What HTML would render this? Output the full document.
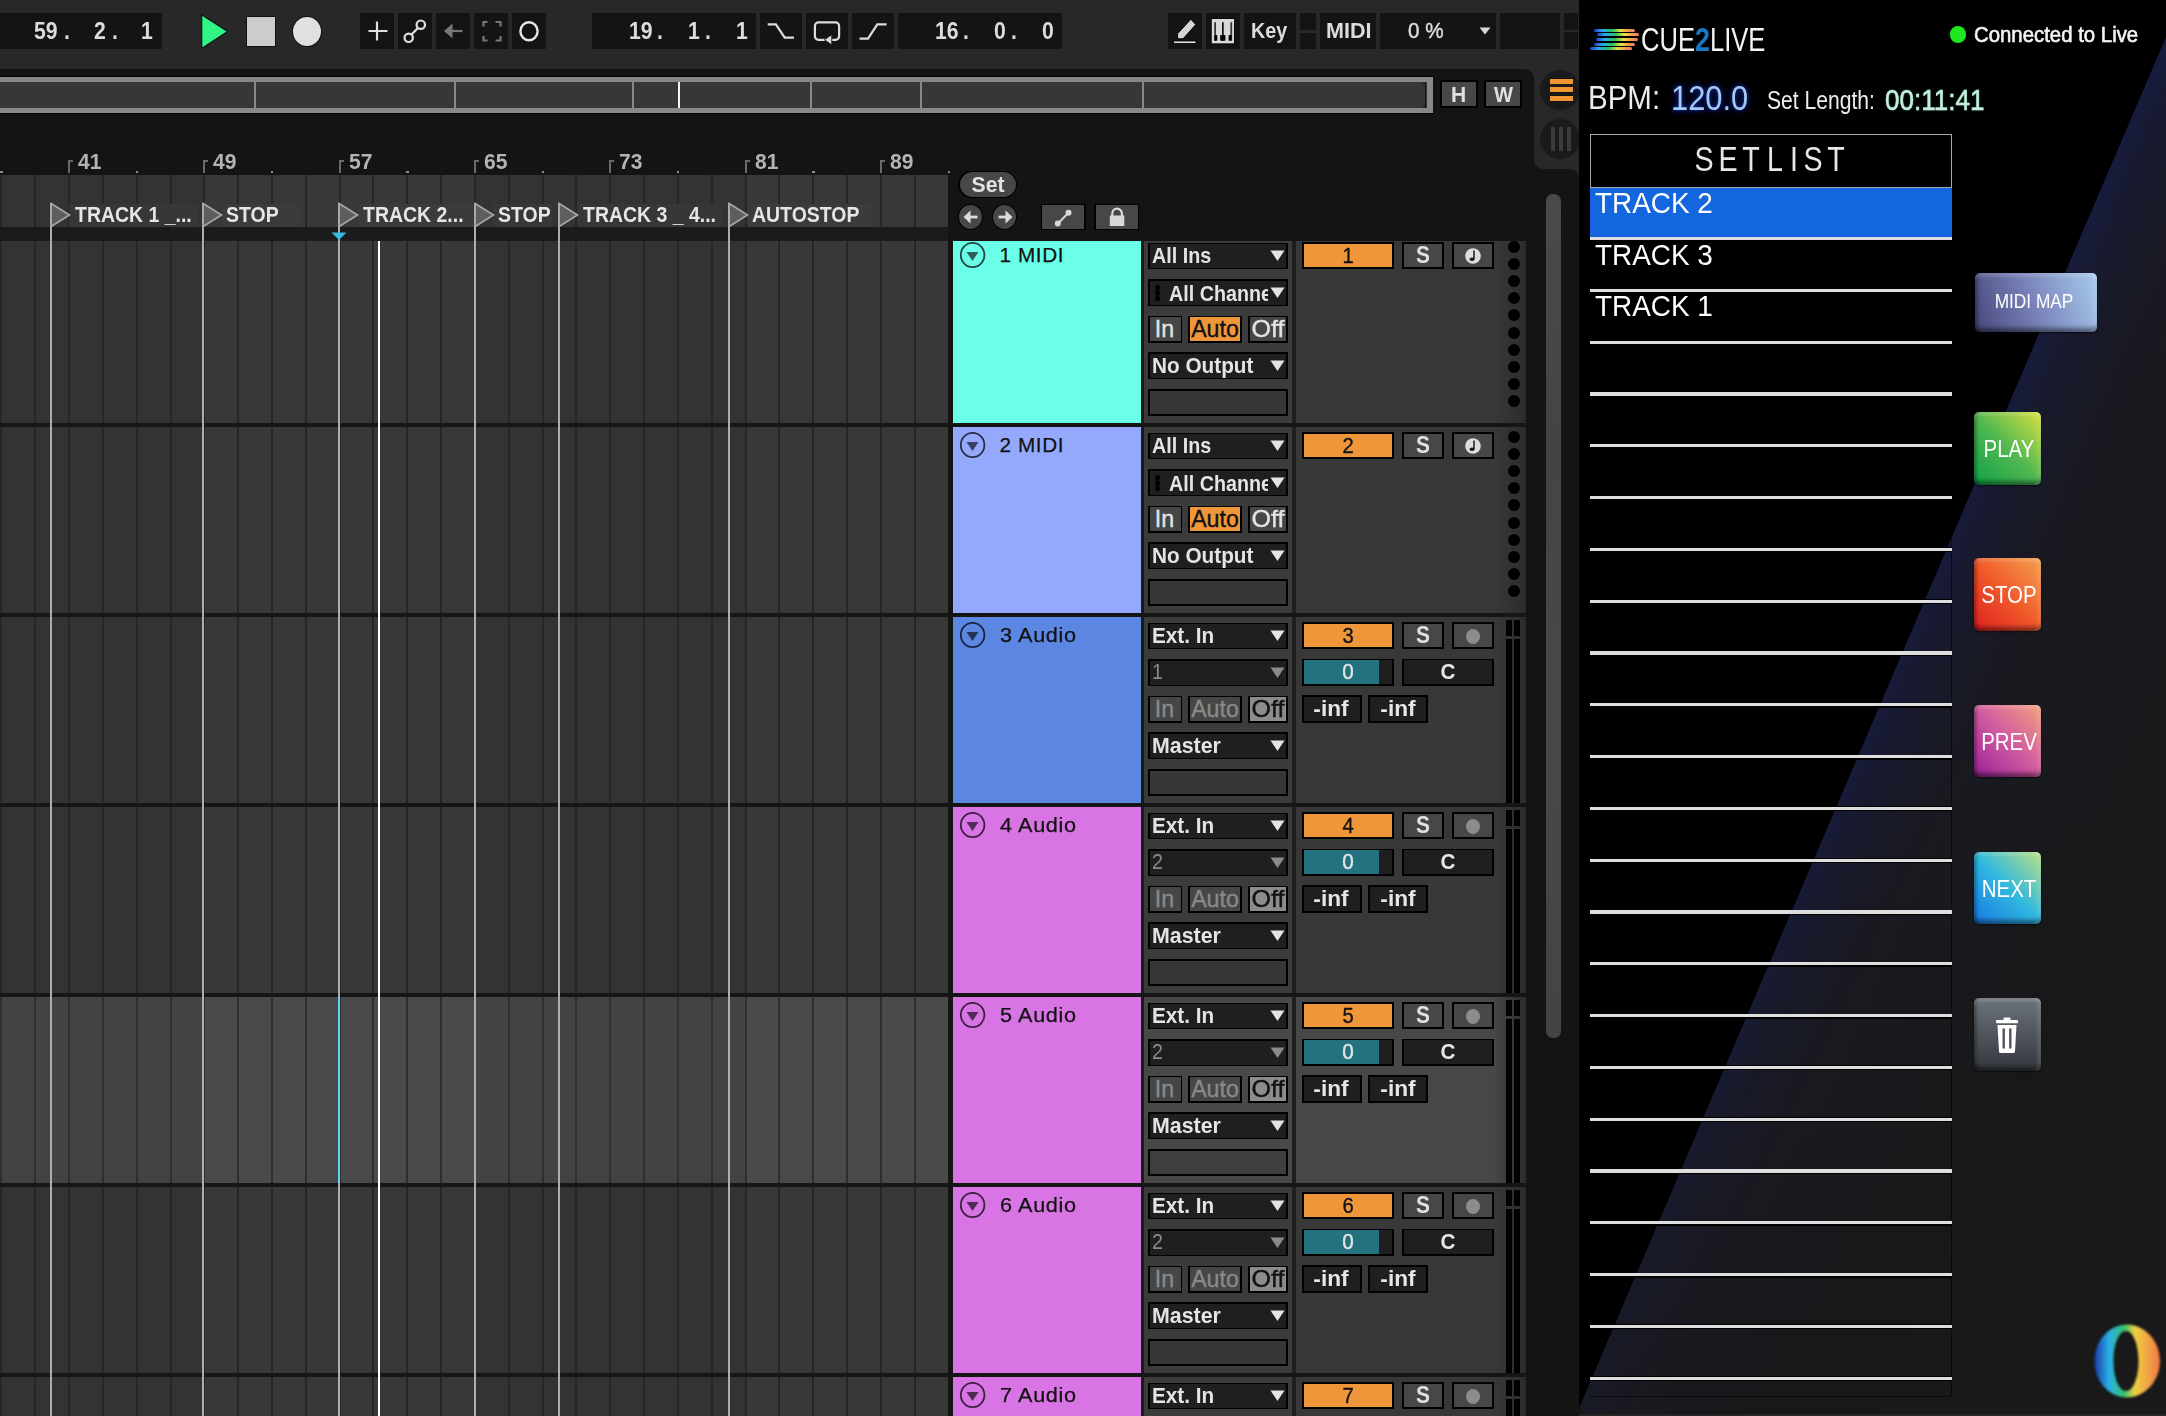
<!DOCTYPE html><html><head><meta charset="utf-8"><style>
html,body{margin:0;padding:0;}
body{width:2166px;height:1416px;overflow:hidden;position:relative;background:#151515;font-family:'Liberation Sans',sans-serif;}
.a{position:absolute;}
.t{position:absolute;white-space:pre;}
</style></head><body>
<div class="a" style="left:0px;top:0px;width:1579px;height:69px;background:#282828;"></div>
<div class="a" style="left:0px;top:13px;width:162px;height:36px;background:#141414;"></div>
<div class="t" style="left:34.00px;top:18.66px;font-size:24.64px;line-height:24.64px;font-weight:bold;color:#dcdcdc;font-family:'Liberation Sans', sans-serif;transform:scaleX(0.86);transform-origin:left top;">59</div>
<div class="t" style="left:63.50px;top:18.66px;font-size:24.64px;line-height:24.64px;font-weight:bold;color:#dcdcdc;font-family:'Liberation Sans', sans-serif;transform:scaleX(0.86);transform-origin:left top;">.</div>
<div class="t" style="left:93.50px;top:18.66px;font-size:24.64px;line-height:24.64px;font-weight:bold;color:#dcdcdc;font-family:'Liberation Sans', sans-serif;transform:scaleX(0.86);transform-origin:left top;">2</div>
<div class="t" style="left:111.50px;top:18.66px;font-size:24.64px;line-height:24.64px;font-weight:bold;color:#dcdcdc;font-family:'Liberation Sans', sans-serif;transform:scaleX(0.86);transform-origin:left top;">.</div>
<div class="t" style="left:141.00px;top:18.66px;font-size:24.64px;line-height:24.64px;font-weight:bold;color:#dcdcdc;font-family:'Liberation Sans', sans-serif;transform:scaleX(0.86);transform-origin:left top;">1</div>
<svg class="a" style="left:199px;top:12px;" width="32" height="40" viewBox="0 0 32 40"><polygon points="2.7,2.8 28.6,19.5 2.7,36.5" fill="#2ff585" stroke="#111" stroke-width="1.2"/></svg>
<div class="a" style="left:247px;top:16.5px;width:28px;height:29.5px;background:#cccccc;box-shadow:0 0 0 1px #111;"></div>
<div class="a" style="left:292.5px;top:16.5px;width:28.5px;height:29.5px;background:#e0e0e0;border-radius:50%;box-shadow:0 0 0 1px #111;"></div>
<div class="a" style="left:360px;top:13px;width:34px;height:36px;background:#141414;"></div>
<div class="a" style="left:398px;top:13px;width:34px;height:36px;background:#141414;"></div>
<div class="a" style="left:436px;top:13px;width:34px;height:36px;background:#141414;"></div>
<div class="a" style="left:474px;top:13px;width:34px;height:36px;background:#141414;"></div>
<div class="a" style="left:512px;top:13px;width:34px;height:36px;background:#141414;"></div>
<svg class="a" style="left:360px;top:13px;" width="34" height="36" viewBox="0 0 34 36"><path d="M17 8.5V27.5M8.5 18H27.5" stroke="#e0e0e0" stroke-width="2.2"/></svg>
<svg class="a" style="left:398px;top:13px;" width="34" height="36" viewBox="0 0 34 36"><circle cx="10.7" cy="24.8" r="4.2" fill="none" stroke="#e0e0e0" stroke-width="2.2"/><circle cx="22.8" cy="11.7" r="4.2" fill="none" stroke="#e0e0e0" stroke-width="2.2"/><path d="M13.6 21.6L19.9 14.9" stroke="#e0e0e0" stroke-width="2.2"/></svg>
<svg class="a" style="left:436px;top:13px;" width="34" height="36" viewBox="0 0 34 36"><polygon points="8,18 16.5,10.5 16.5,25.5" fill="#777"/><path d="M15 18H26.5" stroke="#777" stroke-width="2.2"/></svg>
<svg class="a" style="left:474px;top:13px;" width="34" height="36" viewBox="0 0 34 36"><path d="M9.5 13.5V9H13.5M21.5 9H26.5V13.5M9.5 23V27.5H13.5M21.5 27.5H26.5V23" fill="none" stroke="#777" stroke-width="2.2"/></svg>
<svg class="a" style="left:512px;top:13px;" width="34" height="36" viewBox="0 0 34 36"><ellipse cx="17" cy="18.3" rx="8.6" ry="9" fill="none" stroke="#e6e6e6" stroke-width="2.4"/></svg>
<div class="a" style="left:592px;top:13px;width:164px;height:36px;background:#141414;"></div>
<div class="t" style="left:628.80px;top:18.66px;font-size:24.64px;line-height:24.64px;font-weight:bold;color:#dcdcdc;font-family:'Liberation Sans', sans-serif;transform:scaleX(0.86);transform-origin:left top;">19</div>
<div class="t" style="left:657.00px;top:18.66px;font-size:24.64px;line-height:24.64px;font-weight:bold;color:#dcdcdc;font-family:'Liberation Sans', sans-serif;transform:scaleX(0.86);transform-origin:left top;">.</div>
<div class="t" style="left:688.00px;top:18.66px;font-size:24.64px;line-height:24.64px;font-weight:bold;color:#dcdcdc;font-family:'Liberation Sans', sans-serif;transform:scaleX(0.86);transform-origin:left top;">1</div>
<div class="t" style="left:705.00px;top:18.66px;font-size:24.64px;line-height:24.64px;font-weight:bold;color:#dcdcdc;font-family:'Liberation Sans', sans-serif;transform:scaleX(0.86);transform-origin:left top;">.</div>
<div class="t" style="left:736.00px;top:18.66px;font-size:24.64px;line-height:24.64px;font-weight:bold;color:#dcdcdc;font-family:'Liberation Sans', sans-serif;transform:scaleX(0.86);transform-origin:left top;">1</div>
<div class="a" style="left:760px;top:13px;width:42px;height:36px;background:#141414;"></div>
<div class="a" style="left:806px;top:13px;width:42px;height:36px;background:#141414;"></div>
<div class="a" style="left:852px;top:13px;width:42px;height:36px;background:#141414;"></div>
<svg class="a" style="left:760px;top:13px;" width="42" height="36" viewBox="0 0 42 36"><path d="M7.7 11.4H15.9L24.7 24.7H34" fill="none" stroke="#dcdcdc" stroke-width="2.2"/></svg>
<svg class="a" style="left:806px;top:13px;" width="42" height="36" viewBox="0 0 42 36"><rect x="8.9" y="9.4" width="24.2" height="17.4" rx="3.5" fill="none" stroke="#dcdcdc" stroke-width="2.2"/><polygon points="18.4,26.8 25.8,21.5 25.8,32" fill="#dcdcdc" stroke="#141414" stroke-width="1"/></svg>
<svg class="a" style="left:852px;top:13px;" width="42" height="36" viewBox="0 0 42 36"><path d="M7.6 25.7H16L25.3 11.4H34.6" fill="none" stroke="#dcdcdc" stroke-width="2.2"/></svg>
<div class="a" style="left:898px;top:13px;width:164px;height:36px;background:#141414;"></div>
<div class="t" style="left:934.70px;top:18.66px;font-size:24.64px;line-height:24.64px;font-weight:bold;color:#dcdcdc;font-family:'Liberation Sans', sans-serif;transform:scaleX(0.86);transform-origin:left top;">16</div>
<div class="t" style="left:963.00px;top:18.66px;font-size:24.64px;line-height:24.64px;font-weight:bold;color:#dcdcdc;font-family:'Liberation Sans', sans-serif;transform:scaleX(0.86);transform-origin:left top;">.</div>
<div class="t" style="left:993.50px;top:18.66px;font-size:24.64px;line-height:24.64px;font-weight:bold;color:#dcdcdc;font-family:'Liberation Sans', sans-serif;transform:scaleX(0.86);transform-origin:left top;">0</div>
<div class="t" style="left:1011.00px;top:18.66px;font-size:24.64px;line-height:24.64px;font-weight:bold;color:#dcdcdc;font-family:'Liberation Sans', sans-serif;transform:scaleX(0.86);transform-origin:left top;">.</div>
<div class="t" style="left:1041.50px;top:18.66px;font-size:24.64px;line-height:24.64px;font-weight:bold;color:#dcdcdc;font-family:'Liberation Sans', sans-serif;transform:scaleX(0.86);transform-origin:left top;">0</div>
<div class="a" style="left:1168px;top:13px;width:34px;height:36px;background:#141414;"></div>
<svg class="a" style="left:1168px;top:13px;" width="34" height="36" viewBox="0 0 34 36"><polygon points="22.9,6.2 27.8,11.6 15.1,25.8 9.6,25.8 9.6,20.6" fill="#d4d4d4" stroke="#000" stroke-width="1"/><rect x="5.5" y="28" width="22.5" height="2.6" fill="#dcdcdc" stroke="#000" stroke-width="0.8"/></svg>
<div class="a" style="left:1206px;top:13px;width:34px;height:36px;background:#141414;"></div>
<svg class="a" style="left:1206px;top:13px;" width="34" height="36" viewBox="0 0 34 36"><rect x="5.2" y="5.4" width="23.4" height="25.5" fill="#d8d8d8" stroke="#000" stroke-width="1"/><rect x="8.3" y="9.2" width="1.7" height="18.5" fill="#333"/><rect x="16" y="9.2" width="1.7" height="18.5" fill="#111"/><rect x="24.4" y="9.2" width="1.7" height="18.5" fill="#333"/><rect x="8.3" y="22.1" width="3" height="5.6" fill="#000"/><rect x="14.2" y="22.1" width="5.2" height="5.6" fill="#000"/><rect x="22.6" y="22.1" width="3" height="5.6" fill="#000"/></svg>
<div class="a" style="left:1244px;top:13px;width:52px;height:36px;background:#141414;"></div>
<div class="t" style="left:1251.00px;top:19.71px;font-size:22.46px;line-height:22.46px;font-weight:bold;color:#dcdcdc;font-family:'Liberation Sans', sans-serif;transform:scaleX(0.88);transform-origin:left top;">Key</div>
<div class="a" style="left:1300px;top:13px;width:16px;height:16.5px;background:#141414;"></div>
<div class="a" style="left:1300px;top:32.5px;width:16px;height:16.5px;background:#141414;"></div>
<div class="a" style="left:1320px;top:13px;width:56px;height:36px;background:#141414;"></div>
<div class="t" style="left:1325.80px;top:19.71px;font-size:22.46px;line-height:22.46px;font-weight:bold;color:#dcdcdc;font-family:'Liberation Sans', sans-serif;transform:scaleX(0.96);transform-origin:left top;">MIDI</div>
<div class="a" style="left:1380px;top:13px;width:116px;height:36px;background:#141414;"></div>
<div class="t" style="left:1408.20px;top:19.71px;font-size:22.46px;line-height:22.46px;font-weight:normal;color:#dcdcdc;font-family:'Liberation Sans', sans-serif;transform:scaleX(0.92);transform-origin:left top;-webkit-text-stroke:0.45px #dedede;">0 %</div>
<svg class="a" style="left:1479px;top:27px;" width="12" height="8" viewBox="0 0 12 8"><polygon points="0.5,0.5 11.5,0.5 6,7.5" fill="#d8d8d8"/></svg>
<div class="a" style="left:1500px;top:13px;width:60px;height:36px;background:#141414;"></div>
<div class="a" style="left:1564px;top:13px;width:14px;height:17px;background:#141414;"></div>
<div class="a" style="left:1564px;top:32px;width:14px;height:17px;background:#141414;"></div>
<div class="a" style="left:1515px;top:69px;width:64px;height:120px;background:#282828;"></div>
<div class="a" style="left:0px;top:69px;width:1534px;height:180px;background:#141414;border-top-right-radius:9px;"></div>
<div class="a" style="left:1526px;top:150px;width:16px;height:30px;background:#141414;"></div>
<div class="a" style="left:1534px;top:69px;width:45px;height:100px;background:#282828;border-bottom-left-radius:9px;"></div>
<div class="a" style="left:1526px;top:169px;width:53px;height:1247px;background:#141414;border-top-right-radius:9px;"></div>
<div class="a" style="left:0px;top:76px;width:1433px;height:1px;background:#000;"></div>
<div class="a" style="left:0px;top:77px;width:1433px;height:36px;background:#888888;box-shadow:0 1px 0 #000;"></div>
<div class="a" style="left:0px;top:82px;width:1427px;height:26px;background:#373737;"></div>
<div class="a" style="left:254px;top:82px;width:2px;height:26px;background:#888888;"></div>
<div class="a" style="left:454px;top:82px;width:2px;height:26px;background:#888888;"></div>
<div class="a" style="left:632px;top:82px;width:2px;height:26px;background:#888888;"></div>
<div class="a" style="left:810px;top:82px;width:2px;height:26px;background:#888888;"></div>
<div class="a" style="left:920px;top:82px;width:2px;height:26px;background:#888888;"></div>
<div class="a" style="left:1142px;top:82px;width:2px;height:26px;background:#888888;"></div>
<div class="a" style="left:678px;top:82px;width:2px;height:26px;background:#f4f4f4;"></div>
<div class="a" style="left:1425px;top:83px;width:1.3px;height:24.5px;background:#111;"></div>
<div class="a" style="left:1423px;top:83px;width:3px;height:1.2px;background:#111;"></div>
<div class="a" style="left:1423px;top:106.3px;width:3px;height:1.2px;background:#111;"></div>
<div class="a" style="left:1440px;top:80px;width:38px;height:28px;background:#000;"></div>
<div class="a" style="left:1441.7px;top:82px;width:34.5px;height:24px;background:#474747;"></div>
<div class="a" style="left:1484px;top:80px;width:38px;height:28px;background:#000;"></div>
<div class="a" style="left:1485.7px;top:82px;width:34.5px;height:24px;background:#474747;"></div>
<div class="t" style="left:1451.00px;top:82.64px;font-size:22.90px;line-height:22.90px;font-weight:bold;color:#e0e0e0;font-family:'Liberation Sans', sans-serif;transform:scaleX(0.92);transform-origin:left top;">H</div>
<div class="t" style="left:1493.50px;top:82.64px;font-size:22.90px;line-height:22.90px;font-weight:bold;color:#e0e0e0;font-family:'Liberation Sans', sans-serif;transform:scaleX(0.88);transform-origin:left top;">W</div>
<div class="a" style="left:1540px;top:69.5px;width:40px;height:40px;background:#1a1a1a;border-radius:50%;"></div>
<div class="a" style="left:1549.5px;top:77.8px;width:23.2px;height:6.4px;background:#111;"></div>
<div class="a" style="left:1550px;top:78.5px;width:22.5px;height:5px;background:#ef9532;"></div>
<div class="a" style="left:1549.5px;top:86.5px;width:23.2px;height:6.4px;background:#111;"></div>
<div class="a" style="left:1550px;top:87.2px;width:22.5px;height:5px;background:#ef9532;"></div>
<div class="a" style="left:1549.5px;top:95.3px;width:23.2px;height:6.4px;background:#111;"></div>
<div class="a" style="left:1550px;top:96px;width:22.5px;height:5px;background:#ef9532;"></div>
<div class="a" style="left:1540px;top:119px;width:40px;height:40px;background:#1a1a1a;border-radius:50%;"></div>
<div class="a" style="left:1551px;top:127px;width:4px;height:24px;background:#3a3a3a;"></div>
<div class="a" style="left:1559px;top:127px;width:4px;height:24px;background:#3a3a3a;"></div>
<div class="a" style="left:1567px;top:127px;width:4px;height:24px;background:#3a3a3a;"></div>
<div class="a" style="left:1546px;top:193.5px;width:14.5px;height:844.5px;background:linear-gradient(#4a4a4a,#444 30%,#484848 60%,#444);border-radius:7px;"></div>
<div class="a" style="left:68.0px;top:160px;width:2px;height:13px;background:#6a6a6a;"></div>
<div class="a" style="left:68.0px;top:160px;width:5px;height:2px;background:#6a6a6a;"></div>
<div class="t" style="left:78.00px;top:150.14px;font-size:22.90px;line-height:22.90px;font-weight:bold;color:#b4b4b4;font-family:'Liberation Sans', sans-serif;transform:scaleX(0.92);transform-origin:left top;">41</div>
<div class="a" style="left:203.33px;top:160px;width:2px;height:13px;background:#6a6a6a;"></div>
<div class="a" style="left:203.33px;top:160px;width:5px;height:2px;background:#6a6a6a;"></div>
<div class="t" style="left:213.33px;top:150.14px;font-size:22.90px;line-height:22.90px;font-weight:bold;color:#b4b4b4;font-family:'Liberation Sans', sans-serif;transform:scaleX(0.92);transform-origin:left top;">49</div>
<div class="a" style="left:338.66px;top:160px;width:2px;height:13px;background:#6a6a6a;"></div>
<div class="a" style="left:338.66px;top:160px;width:5px;height:2px;background:#6a6a6a;"></div>
<div class="t" style="left:348.66px;top:150.14px;font-size:22.90px;line-height:22.90px;font-weight:bold;color:#b4b4b4;font-family:'Liberation Sans', sans-serif;transform:scaleX(0.92);transform-origin:left top;">57</div>
<div class="a" style="left:473.99px;top:160px;width:2px;height:13px;background:#6a6a6a;"></div>
<div class="a" style="left:473.99px;top:160px;width:5px;height:2px;background:#6a6a6a;"></div>
<div class="t" style="left:483.99px;top:150.14px;font-size:22.90px;line-height:22.90px;font-weight:bold;color:#b4b4b4;font-family:'Liberation Sans', sans-serif;transform:scaleX(0.92);transform-origin:left top;">65</div>
<div class="a" style="left:609.32px;top:160px;width:2px;height:13px;background:#6a6a6a;"></div>
<div class="a" style="left:609.32px;top:160px;width:5px;height:2px;background:#6a6a6a;"></div>
<div class="t" style="left:619.32px;top:150.14px;font-size:22.90px;line-height:22.90px;font-weight:bold;color:#b4b4b4;font-family:'Liberation Sans', sans-serif;transform:scaleX(0.92);transform-origin:left top;">73</div>
<div class="a" style="left:744.6500000000001px;top:160px;width:2px;height:13px;background:#6a6a6a;"></div>
<div class="a" style="left:744.6500000000001px;top:160px;width:5px;height:2px;background:#6a6a6a;"></div>
<div class="t" style="left:754.65px;top:150.14px;font-size:22.90px;line-height:22.90px;font-weight:bold;color:#b4b4b4;font-family:'Liberation Sans', sans-serif;transform:scaleX(0.92);transform-origin:left top;">81</div>
<div class="a" style="left:879.98px;top:160px;width:2px;height:13px;background:#6a6a6a;"></div>
<div class="a" style="left:879.98px;top:160px;width:5px;height:2px;background:#6a6a6a;"></div>
<div class="t" style="left:889.98px;top:150.14px;font-size:22.90px;line-height:22.90px;font-weight:bold;color:#b4b4b4;font-family:'Liberation Sans', sans-serif;transform:scaleX(0.92);transform-origin:left top;">89</div>
<div class="a" style="left:0.33499999999999375px;top:170.5px;width:2.2px;height:2.2px;background:#8a8a8a;"></div>
<div class="a" style="left:135.66500000000002px;top:170.5px;width:2.2px;height:2.2px;background:#8a8a8a;"></div>
<div class="a" style="left:270.995px;top:170.5px;width:2.2px;height:2.2px;background:#8a8a8a;"></div>
<div class="a" style="left:406.32500000000005px;top:170.5px;width:2.2px;height:2.2px;background:#8a8a8a;"></div>
<div class="a" style="left:541.655px;top:170.5px;width:2.2px;height:2.2px;background:#8a8a8a;"></div>
<div class="a" style="left:676.985px;top:170.5px;width:2.2px;height:2.2px;background:#8a8a8a;"></div>
<div class="a" style="left:812.315px;top:170.5px;width:2.2px;height:2.2px;background:#8a8a8a;"></div>
<div class="a" style="left:947.645px;top:170.5px;width:2.2px;height:2.2px;background:#8a8a8a;"></div>
<div class="a" style="left:0px;top:170.5px;width:2.2px;height:2.2px;background:#8a8a8a;"></div>
<div class="a" style="left:0px;top:174.5px;width:948px;height:52.5px;background:#333333;"></div>
<div class="a" style="left:203.3px;top:174.5px;width:271.4px;height:52.5px;background:#383838;"></div>
<div class="a" style="left:745.3px;top:174.5px;width:202.70000000000005px;height:52.5px;background:#383838;"></div>
<div class="a" style="left:0px;top:227px;width:948px;height:14px;background:#1b1b1b;"></div>
<div class="a" style="left:0.33px;top:174.5px;width:2px;height:52.5px;background:#262626;"></div>
<div class="a" style="left:34.17px;top:174.5px;width:2px;height:52.5px;background:#262626;"></div>
<div class="a" style="left:68.0px;top:174.5px;width:2px;height:52.5px;background:#262626;"></div>
<div class="a" style="left:101.83px;top:174.5px;width:2px;height:52.5px;background:#262626;"></div>
<div class="a" style="left:135.67px;top:174.5px;width:2px;height:52.5px;background:#262626;"></div>
<div class="a" style="left:169.5px;top:174.5px;width:2px;height:52.5px;background:#262626;"></div>
<div class="a" style="left:203.33px;top:174.5px;width:2px;height:52.5px;background:#262626;"></div>
<div class="a" style="left:237.16px;top:174.5px;width:2px;height:52.5px;background:#262626;"></div>
<div class="a" style="left:271.0px;top:174.5px;width:2px;height:52.5px;background:#262626;"></div>
<div class="a" style="left:304.83px;top:174.5px;width:2px;height:52.5px;background:#262626;"></div>
<div class="a" style="left:338.66px;top:174.5px;width:2px;height:52.5px;background:#262626;"></div>
<div class="a" style="left:372.49px;top:174.5px;width:2px;height:52.5px;background:#262626;"></div>
<div class="a" style="left:406.33px;top:174.5px;width:2px;height:52.5px;background:#262626;"></div>
<div class="a" style="left:440.16px;top:174.5px;width:2px;height:52.5px;background:#262626;"></div>
<div class="a" style="left:473.99px;top:174.5px;width:2px;height:52.5px;background:#262626;"></div>
<div class="a" style="left:507.82px;top:174.5px;width:2px;height:52.5px;background:#262626;"></div>
<div class="a" style="left:541.65px;top:174.5px;width:2px;height:52.5px;background:#262626;"></div>
<div class="a" style="left:575.49px;top:174.5px;width:2px;height:52.5px;background:#262626;"></div>
<div class="a" style="left:609.32px;top:174.5px;width:2px;height:52.5px;background:#262626;"></div>
<div class="a" style="left:643.15px;top:174.5px;width:2px;height:52.5px;background:#262626;"></div>
<div class="a" style="left:676.99px;top:174.5px;width:2px;height:52.5px;background:#262626;"></div>
<div class="a" style="left:710.82px;top:174.5px;width:2px;height:52.5px;background:#262626;"></div>
<div class="a" style="left:744.65px;top:174.5px;width:2px;height:52.5px;background:#262626;"></div>
<div class="a" style="left:778.48px;top:174.5px;width:2px;height:52.5px;background:#262626;"></div>
<div class="a" style="left:812.32px;top:174.5px;width:2px;height:52.5px;background:#262626;"></div>
<div class="a" style="left:846.15px;top:174.5px;width:2px;height:52.5px;background:#262626;"></div>
<div class="a" style="left:879.98px;top:174.5px;width:2px;height:52.5px;background:#262626;"></div>
<div class="a" style="left:913.81px;top:174.5px;width:2px;height:52.5px;background:#262626;"></div>
<div class="a" style="left:0px;top:241px;width:948px;height:182px;background:#333333;"></div>
<div class="a" style="left:203.3px;top:241px;width:271.4px;height:182px;background:#383838;"></div>
<div class="a" style="left:745.3px;top:241px;width:202.70000000000005px;height:182px;background:#383838;"></div>
<div class="a" style="left:0.33px;top:241px;width:2px;height:182px;background:#262626;"></div>
<div class="a" style="left:34.17px;top:241px;width:2px;height:182px;background:#262626;"></div>
<div class="a" style="left:68.0px;top:241px;width:2px;height:182px;background:#262626;"></div>
<div class="a" style="left:101.83px;top:241px;width:2px;height:182px;background:#262626;"></div>
<div class="a" style="left:135.67px;top:241px;width:2px;height:182px;background:#262626;"></div>
<div class="a" style="left:169.5px;top:241px;width:2px;height:182px;background:#262626;"></div>
<div class="a" style="left:203.33px;top:241px;width:2px;height:182px;background:#262626;"></div>
<div class="a" style="left:237.16px;top:241px;width:2px;height:182px;background:#262626;"></div>
<div class="a" style="left:271.0px;top:241px;width:2px;height:182px;background:#262626;"></div>
<div class="a" style="left:304.83px;top:241px;width:2px;height:182px;background:#262626;"></div>
<div class="a" style="left:338.66px;top:241px;width:2px;height:182px;background:#262626;"></div>
<div class="a" style="left:372.49px;top:241px;width:2px;height:182px;background:#262626;"></div>
<div class="a" style="left:406.33px;top:241px;width:2px;height:182px;background:#262626;"></div>
<div class="a" style="left:440.16px;top:241px;width:2px;height:182px;background:#262626;"></div>
<div class="a" style="left:473.99px;top:241px;width:2px;height:182px;background:#262626;"></div>
<div class="a" style="left:507.82px;top:241px;width:2px;height:182px;background:#262626;"></div>
<div class="a" style="left:541.65px;top:241px;width:2px;height:182px;background:#262626;"></div>
<div class="a" style="left:575.49px;top:241px;width:2px;height:182px;background:#262626;"></div>
<div class="a" style="left:609.32px;top:241px;width:2px;height:182px;background:#262626;"></div>
<div class="a" style="left:643.15px;top:241px;width:2px;height:182px;background:#262626;"></div>
<div class="a" style="left:676.99px;top:241px;width:2px;height:182px;background:#262626;"></div>
<div class="a" style="left:710.82px;top:241px;width:2px;height:182px;background:#262626;"></div>
<div class="a" style="left:744.65px;top:241px;width:2px;height:182px;background:#262626;"></div>
<div class="a" style="left:778.48px;top:241px;width:2px;height:182px;background:#262626;"></div>
<div class="a" style="left:812.32px;top:241px;width:2px;height:182px;background:#262626;"></div>
<div class="a" style="left:846.15px;top:241px;width:2px;height:182px;background:#262626;"></div>
<div class="a" style="left:879.98px;top:241px;width:2px;height:182px;background:#262626;"></div>
<div class="a" style="left:913.81px;top:241px;width:2px;height:182px;background:#262626;"></div>
<div class="a" style="left:0px;top:423px;width:948px;height:4px;background:#161616;"></div>
<div class="a" style="left:0px;top:427px;width:948px;height:186px;background:#333333;"></div>
<div class="a" style="left:203.3px;top:427px;width:271.4px;height:186px;background:#383838;"></div>
<div class="a" style="left:745.3px;top:427px;width:202.70000000000005px;height:186px;background:#383838;"></div>
<div class="a" style="left:0.33px;top:427px;width:2px;height:186px;background:#262626;"></div>
<div class="a" style="left:34.17px;top:427px;width:2px;height:186px;background:#262626;"></div>
<div class="a" style="left:68.0px;top:427px;width:2px;height:186px;background:#262626;"></div>
<div class="a" style="left:101.83px;top:427px;width:2px;height:186px;background:#262626;"></div>
<div class="a" style="left:135.67px;top:427px;width:2px;height:186px;background:#262626;"></div>
<div class="a" style="left:169.5px;top:427px;width:2px;height:186px;background:#262626;"></div>
<div class="a" style="left:203.33px;top:427px;width:2px;height:186px;background:#262626;"></div>
<div class="a" style="left:237.16px;top:427px;width:2px;height:186px;background:#262626;"></div>
<div class="a" style="left:271.0px;top:427px;width:2px;height:186px;background:#262626;"></div>
<div class="a" style="left:304.83px;top:427px;width:2px;height:186px;background:#262626;"></div>
<div class="a" style="left:338.66px;top:427px;width:2px;height:186px;background:#262626;"></div>
<div class="a" style="left:372.49px;top:427px;width:2px;height:186px;background:#262626;"></div>
<div class="a" style="left:406.33px;top:427px;width:2px;height:186px;background:#262626;"></div>
<div class="a" style="left:440.16px;top:427px;width:2px;height:186px;background:#262626;"></div>
<div class="a" style="left:473.99px;top:427px;width:2px;height:186px;background:#262626;"></div>
<div class="a" style="left:507.82px;top:427px;width:2px;height:186px;background:#262626;"></div>
<div class="a" style="left:541.65px;top:427px;width:2px;height:186px;background:#262626;"></div>
<div class="a" style="left:575.49px;top:427px;width:2px;height:186px;background:#262626;"></div>
<div class="a" style="left:609.32px;top:427px;width:2px;height:186px;background:#262626;"></div>
<div class="a" style="left:643.15px;top:427px;width:2px;height:186px;background:#262626;"></div>
<div class="a" style="left:676.99px;top:427px;width:2px;height:186px;background:#262626;"></div>
<div class="a" style="left:710.82px;top:427px;width:2px;height:186px;background:#262626;"></div>
<div class="a" style="left:744.65px;top:427px;width:2px;height:186px;background:#262626;"></div>
<div class="a" style="left:778.48px;top:427px;width:2px;height:186px;background:#262626;"></div>
<div class="a" style="left:812.32px;top:427px;width:2px;height:186px;background:#262626;"></div>
<div class="a" style="left:846.15px;top:427px;width:2px;height:186px;background:#262626;"></div>
<div class="a" style="left:879.98px;top:427px;width:2px;height:186px;background:#262626;"></div>
<div class="a" style="left:913.81px;top:427px;width:2px;height:186px;background:#262626;"></div>
<div class="a" style="left:0px;top:613px;width:948px;height:4px;background:#161616;"></div>
<div class="a" style="left:0px;top:617px;width:948px;height:186px;background:#333333;"></div>
<div class="a" style="left:203.3px;top:617px;width:271.4px;height:186px;background:#383838;"></div>
<div class="a" style="left:745.3px;top:617px;width:202.70000000000005px;height:186px;background:#383838;"></div>
<div class="a" style="left:0.33px;top:617px;width:2px;height:186px;background:#262626;"></div>
<div class="a" style="left:34.17px;top:617px;width:2px;height:186px;background:#262626;"></div>
<div class="a" style="left:68.0px;top:617px;width:2px;height:186px;background:#262626;"></div>
<div class="a" style="left:101.83px;top:617px;width:2px;height:186px;background:#262626;"></div>
<div class="a" style="left:135.67px;top:617px;width:2px;height:186px;background:#262626;"></div>
<div class="a" style="left:169.5px;top:617px;width:2px;height:186px;background:#262626;"></div>
<div class="a" style="left:203.33px;top:617px;width:2px;height:186px;background:#262626;"></div>
<div class="a" style="left:237.16px;top:617px;width:2px;height:186px;background:#262626;"></div>
<div class="a" style="left:271.0px;top:617px;width:2px;height:186px;background:#262626;"></div>
<div class="a" style="left:304.83px;top:617px;width:2px;height:186px;background:#262626;"></div>
<div class="a" style="left:338.66px;top:617px;width:2px;height:186px;background:#262626;"></div>
<div class="a" style="left:372.49px;top:617px;width:2px;height:186px;background:#262626;"></div>
<div class="a" style="left:406.33px;top:617px;width:2px;height:186px;background:#262626;"></div>
<div class="a" style="left:440.16px;top:617px;width:2px;height:186px;background:#262626;"></div>
<div class="a" style="left:473.99px;top:617px;width:2px;height:186px;background:#262626;"></div>
<div class="a" style="left:507.82px;top:617px;width:2px;height:186px;background:#262626;"></div>
<div class="a" style="left:541.65px;top:617px;width:2px;height:186px;background:#262626;"></div>
<div class="a" style="left:575.49px;top:617px;width:2px;height:186px;background:#262626;"></div>
<div class="a" style="left:609.32px;top:617px;width:2px;height:186px;background:#262626;"></div>
<div class="a" style="left:643.15px;top:617px;width:2px;height:186px;background:#262626;"></div>
<div class="a" style="left:676.99px;top:617px;width:2px;height:186px;background:#262626;"></div>
<div class="a" style="left:710.82px;top:617px;width:2px;height:186px;background:#262626;"></div>
<div class="a" style="left:744.65px;top:617px;width:2px;height:186px;background:#262626;"></div>
<div class="a" style="left:778.48px;top:617px;width:2px;height:186px;background:#262626;"></div>
<div class="a" style="left:812.32px;top:617px;width:2px;height:186px;background:#262626;"></div>
<div class="a" style="left:846.15px;top:617px;width:2px;height:186px;background:#262626;"></div>
<div class="a" style="left:879.98px;top:617px;width:2px;height:186px;background:#262626;"></div>
<div class="a" style="left:913.81px;top:617px;width:2px;height:186px;background:#262626;"></div>
<div class="a" style="left:0px;top:803px;width:948px;height:4px;background:#161616;"></div>
<div class="a" style="left:0px;top:807px;width:948px;height:186px;background:#333333;"></div>
<div class="a" style="left:203.3px;top:807px;width:271.4px;height:186px;background:#383838;"></div>
<div class="a" style="left:745.3px;top:807px;width:202.70000000000005px;height:186px;background:#383838;"></div>
<div class="a" style="left:0.33px;top:807px;width:2px;height:186px;background:#262626;"></div>
<div class="a" style="left:34.17px;top:807px;width:2px;height:186px;background:#262626;"></div>
<div class="a" style="left:68.0px;top:807px;width:2px;height:186px;background:#262626;"></div>
<div class="a" style="left:101.83px;top:807px;width:2px;height:186px;background:#262626;"></div>
<div class="a" style="left:135.67px;top:807px;width:2px;height:186px;background:#262626;"></div>
<div class="a" style="left:169.5px;top:807px;width:2px;height:186px;background:#262626;"></div>
<div class="a" style="left:203.33px;top:807px;width:2px;height:186px;background:#262626;"></div>
<div class="a" style="left:237.16px;top:807px;width:2px;height:186px;background:#262626;"></div>
<div class="a" style="left:271.0px;top:807px;width:2px;height:186px;background:#262626;"></div>
<div class="a" style="left:304.83px;top:807px;width:2px;height:186px;background:#262626;"></div>
<div class="a" style="left:338.66px;top:807px;width:2px;height:186px;background:#262626;"></div>
<div class="a" style="left:372.49px;top:807px;width:2px;height:186px;background:#262626;"></div>
<div class="a" style="left:406.33px;top:807px;width:2px;height:186px;background:#262626;"></div>
<div class="a" style="left:440.16px;top:807px;width:2px;height:186px;background:#262626;"></div>
<div class="a" style="left:473.99px;top:807px;width:2px;height:186px;background:#262626;"></div>
<div class="a" style="left:507.82px;top:807px;width:2px;height:186px;background:#262626;"></div>
<div class="a" style="left:541.65px;top:807px;width:2px;height:186px;background:#262626;"></div>
<div class="a" style="left:575.49px;top:807px;width:2px;height:186px;background:#262626;"></div>
<div class="a" style="left:609.32px;top:807px;width:2px;height:186px;background:#262626;"></div>
<div class="a" style="left:643.15px;top:807px;width:2px;height:186px;background:#262626;"></div>
<div class="a" style="left:676.99px;top:807px;width:2px;height:186px;background:#262626;"></div>
<div class="a" style="left:710.82px;top:807px;width:2px;height:186px;background:#262626;"></div>
<div class="a" style="left:744.65px;top:807px;width:2px;height:186px;background:#262626;"></div>
<div class="a" style="left:778.48px;top:807px;width:2px;height:186px;background:#262626;"></div>
<div class="a" style="left:812.32px;top:807px;width:2px;height:186px;background:#262626;"></div>
<div class="a" style="left:846.15px;top:807px;width:2px;height:186px;background:#262626;"></div>
<div class="a" style="left:879.98px;top:807px;width:2px;height:186px;background:#262626;"></div>
<div class="a" style="left:913.81px;top:807px;width:2px;height:186px;background:#262626;"></div>
<div class="a" style="left:0px;top:993px;width:948px;height:4px;background:#161616;"></div>
<div class="a" style="left:0px;top:997px;width:948px;height:186px;background:#434343;"></div>
<div class="a" style="left:203.3px;top:997px;width:271.4px;height:186px;background:#4a4a4a;"></div>
<div class="a" style="left:745.3px;top:997px;width:202.70000000000005px;height:186px;background:#4a4a4a;"></div>
<div class="a" style="left:0.33px;top:997px;width:2px;height:186px;background:#2f2f2f;"></div>
<div class="a" style="left:34.17px;top:997px;width:2px;height:186px;background:#2f2f2f;"></div>
<div class="a" style="left:68.0px;top:997px;width:2px;height:186px;background:#2f2f2f;"></div>
<div class="a" style="left:101.83px;top:997px;width:2px;height:186px;background:#2f2f2f;"></div>
<div class="a" style="left:135.67px;top:997px;width:2px;height:186px;background:#2f2f2f;"></div>
<div class="a" style="left:169.5px;top:997px;width:2px;height:186px;background:#2f2f2f;"></div>
<div class="a" style="left:203.33px;top:997px;width:2px;height:186px;background:#2f2f2f;"></div>
<div class="a" style="left:237.16px;top:997px;width:2px;height:186px;background:#2f2f2f;"></div>
<div class="a" style="left:271.0px;top:997px;width:2px;height:186px;background:#2f2f2f;"></div>
<div class="a" style="left:304.83px;top:997px;width:2px;height:186px;background:#2f2f2f;"></div>
<div class="a" style="left:338.66px;top:997px;width:2px;height:186px;background:#2f2f2f;"></div>
<div class="a" style="left:372.49px;top:997px;width:2px;height:186px;background:#2f2f2f;"></div>
<div class="a" style="left:406.33px;top:997px;width:2px;height:186px;background:#2f2f2f;"></div>
<div class="a" style="left:440.16px;top:997px;width:2px;height:186px;background:#2f2f2f;"></div>
<div class="a" style="left:473.99px;top:997px;width:2px;height:186px;background:#2f2f2f;"></div>
<div class="a" style="left:507.82px;top:997px;width:2px;height:186px;background:#2f2f2f;"></div>
<div class="a" style="left:541.65px;top:997px;width:2px;height:186px;background:#2f2f2f;"></div>
<div class="a" style="left:575.49px;top:997px;width:2px;height:186px;background:#2f2f2f;"></div>
<div class="a" style="left:609.32px;top:997px;width:2px;height:186px;background:#2f2f2f;"></div>
<div class="a" style="left:643.15px;top:997px;width:2px;height:186px;background:#2f2f2f;"></div>
<div class="a" style="left:676.99px;top:997px;width:2px;height:186px;background:#2f2f2f;"></div>
<div class="a" style="left:710.82px;top:997px;width:2px;height:186px;background:#2f2f2f;"></div>
<div class="a" style="left:744.65px;top:997px;width:2px;height:186px;background:#2f2f2f;"></div>
<div class="a" style="left:778.48px;top:997px;width:2px;height:186px;background:#2f2f2f;"></div>
<div class="a" style="left:812.32px;top:997px;width:2px;height:186px;background:#2f2f2f;"></div>
<div class="a" style="left:846.15px;top:997px;width:2px;height:186px;background:#2f2f2f;"></div>
<div class="a" style="left:879.98px;top:997px;width:2px;height:186px;background:#2f2f2f;"></div>
<div class="a" style="left:913.81px;top:997px;width:2px;height:186px;background:#2f2f2f;"></div>
<div class="a" style="left:0px;top:1183px;width:948px;height:4px;background:#161616;"></div>
<div class="a" style="left:0px;top:1187px;width:948px;height:186px;background:#333333;"></div>
<div class="a" style="left:203.3px;top:1187px;width:271.4px;height:186px;background:#383838;"></div>
<div class="a" style="left:745.3px;top:1187px;width:202.70000000000005px;height:186px;background:#383838;"></div>
<div class="a" style="left:0.33px;top:1187px;width:2px;height:186px;background:#262626;"></div>
<div class="a" style="left:34.17px;top:1187px;width:2px;height:186px;background:#262626;"></div>
<div class="a" style="left:68.0px;top:1187px;width:2px;height:186px;background:#262626;"></div>
<div class="a" style="left:101.83px;top:1187px;width:2px;height:186px;background:#262626;"></div>
<div class="a" style="left:135.67px;top:1187px;width:2px;height:186px;background:#262626;"></div>
<div class="a" style="left:169.5px;top:1187px;width:2px;height:186px;background:#262626;"></div>
<div class="a" style="left:203.33px;top:1187px;width:2px;height:186px;background:#262626;"></div>
<div class="a" style="left:237.16px;top:1187px;width:2px;height:186px;background:#262626;"></div>
<div class="a" style="left:271.0px;top:1187px;width:2px;height:186px;background:#262626;"></div>
<div class="a" style="left:304.83px;top:1187px;width:2px;height:186px;background:#262626;"></div>
<div class="a" style="left:338.66px;top:1187px;width:2px;height:186px;background:#262626;"></div>
<div class="a" style="left:372.49px;top:1187px;width:2px;height:186px;background:#262626;"></div>
<div class="a" style="left:406.33px;top:1187px;width:2px;height:186px;background:#262626;"></div>
<div class="a" style="left:440.16px;top:1187px;width:2px;height:186px;background:#262626;"></div>
<div class="a" style="left:473.99px;top:1187px;width:2px;height:186px;background:#262626;"></div>
<div class="a" style="left:507.82px;top:1187px;width:2px;height:186px;background:#262626;"></div>
<div class="a" style="left:541.65px;top:1187px;width:2px;height:186px;background:#262626;"></div>
<div class="a" style="left:575.49px;top:1187px;width:2px;height:186px;background:#262626;"></div>
<div class="a" style="left:609.32px;top:1187px;width:2px;height:186px;background:#262626;"></div>
<div class="a" style="left:643.15px;top:1187px;width:2px;height:186px;background:#262626;"></div>
<div class="a" style="left:676.99px;top:1187px;width:2px;height:186px;background:#262626;"></div>
<div class="a" style="left:710.82px;top:1187px;width:2px;height:186px;background:#262626;"></div>
<div class="a" style="left:744.65px;top:1187px;width:2px;height:186px;background:#262626;"></div>
<div class="a" style="left:778.48px;top:1187px;width:2px;height:186px;background:#262626;"></div>
<div class="a" style="left:812.32px;top:1187px;width:2px;height:186px;background:#262626;"></div>
<div class="a" style="left:846.15px;top:1187px;width:2px;height:186px;background:#262626;"></div>
<div class="a" style="left:879.98px;top:1187px;width:2px;height:186px;background:#262626;"></div>
<div class="a" style="left:913.81px;top:1187px;width:2px;height:186px;background:#262626;"></div>
<div class="a" style="left:0px;top:1373px;width:948px;height:4px;background:#161616;"></div>
<div class="a" style="left:0px;top:1377px;width:948px;height:39px;background:#333333;"></div>
<div class="a" style="left:203.3px;top:1377px;width:271.4px;height:39px;background:#383838;"></div>
<div class="a" style="left:745.3px;top:1377px;width:202.70000000000005px;height:39px;background:#383838;"></div>
<div class="a" style="left:0.33px;top:1377px;width:2px;height:39px;background:#262626;"></div>
<div class="a" style="left:34.17px;top:1377px;width:2px;height:39px;background:#262626;"></div>
<div class="a" style="left:68.0px;top:1377px;width:2px;height:39px;background:#262626;"></div>
<div class="a" style="left:101.83px;top:1377px;width:2px;height:39px;background:#262626;"></div>
<div class="a" style="left:135.67px;top:1377px;width:2px;height:39px;background:#262626;"></div>
<div class="a" style="left:169.5px;top:1377px;width:2px;height:39px;background:#262626;"></div>
<div class="a" style="left:203.33px;top:1377px;width:2px;height:39px;background:#262626;"></div>
<div class="a" style="left:237.16px;top:1377px;width:2px;height:39px;background:#262626;"></div>
<div class="a" style="left:271.0px;top:1377px;width:2px;height:39px;background:#262626;"></div>
<div class="a" style="left:304.83px;top:1377px;width:2px;height:39px;background:#262626;"></div>
<div class="a" style="left:338.66px;top:1377px;width:2px;height:39px;background:#262626;"></div>
<div class="a" style="left:372.49px;top:1377px;width:2px;height:39px;background:#262626;"></div>
<div class="a" style="left:406.33px;top:1377px;width:2px;height:39px;background:#262626;"></div>
<div class="a" style="left:440.16px;top:1377px;width:2px;height:39px;background:#262626;"></div>
<div class="a" style="left:473.99px;top:1377px;width:2px;height:39px;background:#262626;"></div>
<div class="a" style="left:507.82px;top:1377px;width:2px;height:39px;background:#262626;"></div>
<div class="a" style="left:541.65px;top:1377px;width:2px;height:39px;background:#262626;"></div>
<div class="a" style="left:575.49px;top:1377px;width:2px;height:39px;background:#262626;"></div>
<div class="a" style="left:609.32px;top:1377px;width:2px;height:39px;background:#262626;"></div>
<div class="a" style="left:643.15px;top:1377px;width:2px;height:39px;background:#262626;"></div>
<div class="a" style="left:676.99px;top:1377px;width:2px;height:39px;background:#262626;"></div>
<div class="a" style="left:710.82px;top:1377px;width:2px;height:39px;background:#262626;"></div>
<div class="a" style="left:744.65px;top:1377px;width:2px;height:39px;background:#262626;"></div>
<div class="a" style="left:778.48px;top:1377px;width:2px;height:39px;background:#262626;"></div>
<div class="a" style="left:812.32px;top:1377px;width:2px;height:39px;background:#262626;"></div>
<div class="a" style="left:846.15px;top:1377px;width:2px;height:39px;background:#262626;"></div>
<div class="a" style="left:879.98px;top:1377px;width:2px;height:39px;background:#262626;"></div>
<div class="a" style="left:913.81px;top:1377px;width:2px;height:39px;background:#262626;"></div>
<div class="a" style="left:69px;top:203.5px;width:129px;height:23px;background:#373737;"></div>
<div class="a" style="left:221px;top:203.5px;width:79px;height:23px;background:#3b3b3b;"></div>
<div class="a" style="left:357px;top:203.5px;width:116px;height:23px;background:#3b3b3b;"></div>
<div class="a" style="left:493px;top:203.5px;width:59px;height:23px;background:#373737;"></div>
<div class="a" style="left:577px;top:203.5px;width:145px;height:23px;background:#373737;"></div>
<div class="a" style="left:747px;top:203.5px;width:125px;height:23px;background:#3b3b3b;"></div>
<div class="a" style="left:50px;top:203px;width:2px;height:1213px;background:#aeaeae;"></div>
<svg class="a" style="left:50px;top:202px;" width="22" height="26" viewBox="0 0 22 26"><polygon points="1.2,1.5 19.5,13 1.2,24.5" fill="#5e5e5e" stroke="#a8a8a8" stroke-width="1.6"/></svg>
<div class="t" style="left:74.50px;top:203.14px;font-size:22.90px;line-height:22.90px;font-weight:bold;color:#e6e6e6;font-family:'Liberation Sans', sans-serif;transform:scaleX(0.85);transform-origin:left top;">TRACK 1 _...</div>
<div class="a" style="left:202px;top:203px;width:2px;height:1213px;background:#aeaeae;"></div>
<svg class="a" style="left:202px;top:202px;" width="22" height="26" viewBox="0 0 22 26"><polygon points="1.2,1.5 19.5,13 1.2,24.5" fill="#5e5e5e" stroke="#a8a8a8" stroke-width="1.6"/></svg>
<div class="t" style="left:226.00px;top:203.14px;font-size:22.90px;line-height:22.90px;font-weight:bold;color:#e6e6e6;font-family:'Liberation Sans', sans-serif;transform:scaleX(0.85);transform-origin:left top;">STOP</div>
<div class="a" style="left:338px;top:203px;width:2px;height:1213px;background:#aeaeae;"></div>
<svg class="a" style="left:338px;top:202px;" width="22" height="26" viewBox="0 0 22 26"><polygon points="1.2,1.5 19.5,13 1.2,24.5" fill="#5e5e5e" stroke="#a8a8a8" stroke-width="1.6"/></svg>
<div class="t" style="left:362.50px;top:203.14px;font-size:22.90px;line-height:22.90px;font-weight:bold;color:#e6e6e6;font-family:'Liberation Sans', sans-serif;transform:scaleX(0.85);transform-origin:left top;">TRACK 2...</div>
<div class="a" style="left:474px;top:203px;width:2px;height:1213px;background:#aeaeae;"></div>
<svg class="a" style="left:474px;top:202px;" width="22" height="26" viewBox="0 0 22 26"><polygon points="1.2,1.5 19.5,13 1.2,24.5" fill="#5e5e5e" stroke="#a8a8a8" stroke-width="1.6"/></svg>
<div class="t" style="left:498.20px;top:203.14px;font-size:22.90px;line-height:22.90px;font-weight:bold;color:#e6e6e6;font-family:'Liberation Sans', sans-serif;transform:scaleX(0.85);transform-origin:left top;">STOP</div>
<div class="a" style="left:558px;top:203px;width:2px;height:1213px;background:#aeaeae;"></div>
<svg class="a" style="left:558px;top:202px;" width="22" height="26" viewBox="0 0 22 26"><polygon points="1.2,1.5 19.5,13 1.2,24.5" fill="#5e5e5e" stroke="#a8a8a8" stroke-width="1.6"/></svg>
<div class="t" style="left:582.70px;top:203.14px;font-size:22.90px;line-height:22.90px;font-weight:bold;color:#e6e6e6;font-family:'Liberation Sans', sans-serif;transform:scaleX(0.85);transform-origin:left top;">TRACK 3 _ 4...</div>
<div class="a" style="left:728px;top:203px;width:2px;height:1213px;background:#aeaeae;"></div>
<svg class="a" style="left:728px;top:202px;" width="22" height="26" viewBox="0 0 22 26"><polygon points="1.2,1.5 19.5,13 1.2,24.5" fill="#5e5e5e" stroke="#a8a8a8" stroke-width="1.6"/></svg>
<div class="t" style="left:752.10px;top:203.14px;font-size:22.90px;line-height:22.90px;font-weight:bold;color:#e6e6e6;font-family:'Liberation Sans', sans-serif;transform:scaleX(0.85);transform-origin:left top;">AUTOSTOP</div>
<div class="a" style="left:338px;top:235px;width:2px;height:6px;background:#000;display:none;"></div>
<svg class="a" style="left:331px;top:232px;" width="18" height="10" viewBox="0 0 18 10"><polygon points="0.5,0.5 15.5,0.5 8,8" fill="#39b8e0"/></svg>
<div class="a" style="left:338px;top:997px;width:2px;height:186px;background:#5fd3f3;"></div>
<div class="a" style="left:378px;top:241px;width:2.2px;height:1175px;background:#ffffff;"></div>
<div class="a" style="left:948px;top:241px;width:5px;height:1175px;background:#151515;"></div>
<div class="a" style="left:953px;top:241px;width:188px;height:182px;background:#6bffe9;"></div>
<div class="a" style="left:1140.5px;top:241px;width:3.5px;height:182px;background:#1a1a1a;"></div>
<div class="a" style="left:1144px;top:241px;width:148px;height:182px;background:#3b3b3b;"></div>
<div class="a" style="left:1292px;top:241px;width:4px;height:182px;background:#1e1e1e;"></div>
<div class="a" style="left:1296px;top:241px;width:230px;height:182px;background:linear-gradient(90deg,#383838 0%,#383838 86%,#2c2c2c 100%);"></div>
<svg class="a" style="left:959px;top:242px;" width="28" height="28" viewBox="0 0 28 28"><ellipse cx="13.6" cy="13" rx="11.8" ry="12.2" fill="none" stroke="rgba(0,0,0,0.72)" stroke-width="1.8"/><polygon points="7.5,10 19.5,10 13.5,19" fill="rgba(0,0,0,0.62)"/></svg>
<div class="t" style="left:999.50px;top:245.28px;font-size:20.72px;line-height:20.72px;font-weight:normal;color:#121212;font-family:'Liberation Sans', sans-serif;letter-spacing:0.6px;-webkit-text-stroke:0.25px #121212;">1 MIDI</div>
<div class="a" style="left:1148px;top:242.5px;width:139.7px;height:26.6px;background:#000;"></div>
<div class="a" style="left:1149.5px;top:244.0px;width:136.7px;height:23.6px;background:#1f1f1f;"></div>
<div class="t" style="left:1152.00px;top:244.95px;font-size:22.17px;line-height:22.17px;font-weight:bold;color:#e4e4e4;font-family:'Liberation Sans', sans-serif;transform:scaleX(0.89);transform-origin:left top;">All Ins</div>
<div class="a" style="left:1267.7px;top:244.0px;width:18.5px;height:23.6px;background:#1f1f1f;"></div>
<svg class="a" style="left:1269.7px;top:250.0px;" width="15" height="12" viewBox="0 0 15 12"><polygon points="0.5,0.5 14.5,0.5 7.5,11" fill="#e4e4e4"/></svg>
<div class="a" style="left:1148px;top:279px;width:139.7px;height:27px;background:#000;"></div>
<div class="a" style="left:1149.5px;top:280.5px;width:136.7px;height:24px;background:#1f1f1f;"></div>
<div class="a" style="left:1154.5px;top:284.5px;width:5.5px;height:5.5px;background:#000;border-radius:50%;"></div>
<div class="a" style="left:1154.5px;top:290px;width:5.5px;height:5.5px;background:#000;border-radius:50%;"></div>
<div class="a" style="left:1154.5px;top:295.5px;width:5.5px;height:5.5px;background:#000;border-radius:50%;"></div>
<div class="t" style="left:1169.00px;top:282.65px;font-size:22.17px;line-height:22.17px;font-weight:bold;color:#e4e4e4;font-family:'Liberation Sans', sans-serif;transform:scaleX(0.89);transform-origin:left top;">All Channe</div>
<div class="a" style="left:1267.7px;top:280.5px;width:18.5px;height:24px;background:#1f1f1f;"></div>
<svg class="a" style="left:1269.7px;top:286.5px;" width="15" height="12" viewBox="0 0 15 12"><polygon points="0.5,0.5 14.5,0.5 7.5,11" fill="#e4e4e4"/></svg>
<div class="a" style="left:1148px;top:315.5px;width:34px;height:27px;background:#000;"></div>
<div class="a" style="left:1149.5px;top:317.0px;width:31px;height:24px;background:#464646;"></div>
<div class="t" style="left:664.50px;width:1000px;text-align:center;top:318.49px;font-size:23.19px;line-height:23.19px;font-weight:normal;color:#e4e4e4;font-family:'Liberation Sans', sans-serif;-webkit-text-stroke:0.35px #e4e4e4;">In</div>
<div class="a" style="left:1188.4px;top:315.5px;width:53.3px;height:27px;background:#000;"></div>
<div class="a" style="left:1189.9px;top:317.0px;width:50.3px;height:24px;background:#f0963a;"></div>
<div class="t" style="left:715.00px;width:1000px;text-align:center;top:318.49px;font-size:23.19px;line-height:23.19px;font-weight:normal;color:#111;font-family:'Liberation Sans', sans-serif;-webkit-text-stroke:0.35px #111;">Auto</div>
<div class="a" style="left:1248px;top:315.5px;width:39.7px;height:27px;background:#000;"></div>
<div class="a" style="left:1249.5px;top:317.0px;width:36.7px;height:24px;background:#464646;"></div>
<div class="t" style="left:768.40px;width:1000px;text-align:center;top:318.49px;font-size:23.19px;line-height:23.19px;font-weight:normal;color:#e4e4e4;font-family:'Liberation Sans', sans-serif;transform:scaleX(1.08);transform-origin:center top;-webkit-text-stroke:0.35px #e4e4e4;">Off</div>
<div class="a" style="left:1148px;top:352.3px;width:139.7px;height:27px;background:#000;"></div>
<div class="a" style="left:1149.5px;top:353.8px;width:136.7px;height:24px;background:#1f1f1f;"></div>
<div class="t" style="left:1152.00px;top:354.75px;font-size:22.17px;line-height:22.17px;font-weight:bold;color:#e4e4e4;font-family:'Liberation Sans', sans-serif;transform:scaleX(0.937);transform-origin:left top;">No Output</div>
<div class="a" style="left:1267.7px;top:353.8px;width:18.5px;height:24px;background:#1f1f1f;"></div>
<svg class="a" style="left:1269.7px;top:359.8px;" width="15" height="12" viewBox="0 0 15 12"><polygon points="0.5,0.5 14.5,0.5 7.5,11" fill="#e4e4e4"/></svg>
<div class="a" style="left:1148px;top:389.2px;width:139.7px;height:26.6px;background:#000;"></div>
<div class="a" style="left:1149.5px;top:390.7px;width:136.7px;height:23.6px;background:#373737;"></div>
<div class="a" style="left:1302px;top:242.4px;width:91.6px;height:26.6px;background:#000;"></div>
<div class="a" style="left:1303.5px;top:243.9px;width:88.6px;height:23.6px;background:#f0963a;"></div>
<div class="t" style="left:847.80px;width:1000px;text-align:center;top:244.56px;font-size:22.46px;line-height:22.46px;font-weight:normal;color:#111;font-family:'Liberation Sans', sans-serif;transform:scaleX(0.9);transform-origin:center top;-webkit-text-stroke:0.35px #111;">1</div>
<div class="a" style="left:1402.2px;top:242.4px;width:41.5px;height:26.6px;background:#000;"></div>
<div class="a" style="left:1403.7px;top:243.9px;width:38.5px;height:23.6px;background:#474747;"></div>
<div class="t" style="left:922.95px;width:1000px;text-align:center;top:243.89px;font-size:23.19px;line-height:23.19px;font-weight:bold;color:#e0e0e0;font-family:'Liberation Sans', sans-serif;transform:scaleX(0.9);transform-origin:center top;">S</div>
<div class="a" style="left:1452.2px;top:242.4px;width:41.5px;height:26.6px;background:#000;"></div>
<div class="a" style="left:1453.7px;top:243.9px;width:38.5px;height:23.6px;background:#474747;"></div>
<svg class="a" style="left:1464px;top:247px;" width="18" height="18" viewBox="0 0 18 18"><circle cx="9" cy="9" r="7.8" fill="#dedede"/><path d="M10 3.5V12" stroke="#1a1a1a" stroke-width="1.5"/><ellipse cx="8" cy="12.3" rx="2.4" ry="1.8" fill="#1a1a1a"/></svg>
<div class="a" style="left:1508px;top:240.5px;width:12px;height:12px;background:#000;border-radius:50%;"></div>
<div class="a" style="left:1508px;top:257.7px;width:12px;height:12px;background:#000;border-radius:50%;"></div>
<div class="a" style="left:1508px;top:274.9px;width:12px;height:12px;background:#000;border-radius:50%;"></div>
<div class="a" style="left:1508px;top:292.1px;width:12px;height:12px;background:#000;border-radius:50%;"></div>
<div class="a" style="left:1508px;top:309.3px;width:12px;height:12px;background:#000;border-radius:50%;"></div>
<div class="a" style="left:1508px;top:326.5px;width:12px;height:12px;background:#000;border-radius:50%;"></div>
<div class="a" style="left:1508px;top:343.7px;width:12px;height:12px;background:#000;border-radius:50%;"></div>
<div class="a" style="left:1508px;top:360.9px;width:12px;height:12px;background:#000;border-radius:50%;"></div>
<div class="a" style="left:1508px;top:378.1px;width:12px;height:12px;background:#000;border-radius:50%;"></div>
<div class="a" style="left:1508px;top:395.29999999999995px;width:12px;height:12px;background:#000;border-radius:50%;"></div>
<div class="a" style="left:953px;top:427px;width:188px;height:186px;background:#95a9fc;"></div>
<div class="a" style="left:1140.5px;top:427px;width:3.5px;height:186px;background:#1a1a1a;"></div>
<div class="a" style="left:1144px;top:427px;width:148px;height:186px;background:#3b3b3b;"></div>
<div class="a" style="left:1292px;top:427px;width:4px;height:186px;background:#1e1e1e;"></div>
<div class="a" style="left:1296px;top:427px;width:230px;height:186px;background:linear-gradient(90deg,#383838 0%,#383838 86%,#2c2c2c 100%);"></div>
<svg class="a" style="left:959px;top:432px;" width="28" height="28" viewBox="0 0 28 28"><ellipse cx="13.6" cy="13" rx="11.8" ry="12.2" fill="none" stroke="rgba(0,0,0,0.72)" stroke-width="1.8"/><polygon points="7.5,10 19.5,10 13.5,19" fill="rgba(0,0,0,0.62)"/></svg>
<div class="t" style="left:999.50px;top:435.28px;font-size:20.72px;line-height:20.72px;font-weight:normal;color:#121212;font-family:'Liberation Sans', sans-serif;letter-spacing:0.6px;-webkit-text-stroke:0.25px #121212;">2 MIDI</div>
<div class="a" style="left:1148px;top:432.5px;width:139.7px;height:26.6px;background:#000;"></div>
<div class="a" style="left:1149.5px;top:434.0px;width:136.7px;height:23.6px;background:#1f1f1f;"></div>
<div class="t" style="left:1152.00px;top:434.95px;font-size:22.17px;line-height:22.17px;font-weight:bold;color:#e4e4e4;font-family:'Liberation Sans', sans-serif;transform:scaleX(0.89);transform-origin:left top;">All Ins</div>
<div class="a" style="left:1267.7px;top:434.0px;width:18.5px;height:23.6px;background:#1f1f1f;"></div>
<svg class="a" style="left:1269.7px;top:440.0px;" width="15" height="12" viewBox="0 0 15 12"><polygon points="0.5,0.5 14.5,0.5 7.5,11" fill="#e4e4e4"/></svg>
<div class="a" style="left:1148px;top:469px;width:139.7px;height:27px;background:#000;"></div>
<div class="a" style="left:1149.5px;top:470.5px;width:136.7px;height:24px;background:#1f1f1f;"></div>
<div class="a" style="left:1154.5px;top:474.5px;width:5.5px;height:5.5px;background:#000;border-radius:50%;"></div>
<div class="a" style="left:1154.5px;top:480px;width:5.5px;height:5.5px;background:#000;border-radius:50%;"></div>
<div class="a" style="left:1154.5px;top:485.5px;width:5.5px;height:5.5px;background:#000;border-radius:50%;"></div>
<div class="t" style="left:1169.00px;top:472.65px;font-size:22.17px;line-height:22.17px;font-weight:bold;color:#e4e4e4;font-family:'Liberation Sans', sans-serif;transform:scaleX(0.89);transform-origin:left top;">All Channe</div>
<div class="a" style="left:1267.7px;top:470.5px;width:18.5px;height:24px;background:#1f1f1f;"></div>
<svg class="a" style="left:1269.7px;top:476.5px;" width="15" height="12" viewBox="0 0 15 12"><polygon points="0.5,0.5 14.5,0.5 7.5,11" fill="#e4e4e4"/></svg>
<div class="a" style="left:1148px;top:505.5px;width:34px;height:27px;background:#000;"></div>
<div class="a" style="left:1149.5px;top:507.0px;width:31px;height:24px;background:#464646;"></div>
<div class="t" style="left:664.50px;width:1000px;text-align:center;top:508.49px;font-size:23.19px;line-height:23.19px;font-weight:normal;color:#e4e4e4;font-family:'Liberation Sans', sans-serif;-webkit-text-stroke:0.35px #e4e4e4;">In</div>
<div class="a" style="left:1188.4px;top:505.5px;width:53.3px;height:27px;background:#000;"></div>
<div class="a" style="left:1189.9px;top:507.0px;width:50.3px;height:24px;background:#f0963a;"></div>
<div class="t" style="left:715.00px;width:1000px;text-align:center;top:508.49px;font-size:23.19px;line-height:23.19px;font-weight:normal;color:#111;font-family:'Liberation Sans', sans-serif;-webkit-text-stroke:0.35px #111;">Auto</div>
<div class="a" style="left:1248px;top:505.5px;width:39.7px;height:27px;background:#000;"></div>
<div class="a" style="left:1249.5px;top:507.0px;width:36.7px;height:24px;background:#464646;"></div>
<div class="t" style="left:768.40px;width:1000px;text-align:center;top:508.49px;font-size:23.19px;line-height:23.19px;font-weight:normal;color:#e4e4e4;font-family:'Liberation Sans', sans-serif;transform:scaleX(1.08);transform-origin:center top;-webkit-text-stroke:0.35px #e4e4e4;">Off</div>
<div class="a" style="left:1148px;top:542.3px;width:139.7px;height:27px;background:#000;"></div>
<div class="a" style="left:1149.5px;top:543.8px;width:136.7px;height:24px;background:#1f1f1f;"></div>
<div class="t" style="left:1152.00px;top:544.75px;font-size:22.17px;line-height:22.17px;font-weight:bold;color:#e4e4e4;font-family:'Liberation Sans', sans-serif;transform:scaleX(0.937);transform-origin:left top;">No Output</div>
<div class="a" style="left:1267.7px;top:543.8px;width:18.5px;height:24px;background:#1f1f1f;"></div>
<svg class="a" style="left:1269.7px;top:549.8px;" width="15" height="12" viewBox="0 0 15 12"><polygon points="0.5,0.5 14.5,0.5 7.5,11" fill="#e4e4e4"/></svg>
<div class="a" style="left:1148px;top:579.2px;width:139.7px;height:26.6px;background:#000;"></div>
<div class="a" style="left:1149.5px;top:580.7px;width:136.7px;height:23.6px;background:#373737;"></div>
<div class="a" style="left:1302px;top:432.4px;width:91.6px;height:26.6px;background:#000;"></div>
<div class="a" style="left:1303.5px;top:433.9px;width:88.6px;height:23.6px;background:#f0963a;"></div>
<div class="t" style="left:847.80px;width:1000px;text-align:center;top:434.56px;font-size:22.46px;line-height:22.46px;font-weight:normal;color:#111;font-family:'Liberation Sans', sans-serif;transform:scaleX(0.9);transform-origin:center top;-webkit-text-stroke:0.35px #111;">2</div>
<div class="a" style="left:1402.2px;top:432.4px;width:41.5px;height:26.6px;background:#000;"></div>
<div class="a" style="left:1403.7px;top:433.9px;width:38.5px;height:23.6px;background:#474747;"></div>
<div class="t" style="left:922.95px;width:1000px;text-align:center;top:433.89px;font-size:23.19px;line-height:23.19px;font-weight:bold;color:#e0e0e0;font-family:'Liberation Sans', sans-serif;transform:scaleX(0.9);transform-origin:center top;">S</div>
<div class="a" style="left:1452.2px;top:432.4px;width:41.5px;height:26.6px;background:#000;"></div>
<div class="a" style="left:1453.7px;top:433.9px;width:38.5px;height:23.6px;background:#474747;"></div>
<svg class="a" style="left:1464px;top:437px;" width="18" height="18" viewBox="0 0 18 18"><circle cx="9" cy="9" r="7.8" fill="#dedede"/><path d="M10 3.5V12" stroke="#1a1a1a" stroke-width="1.5"/><ellipse cx="8" cy="12.3" rx="2.4" ry="1.8" fill="#1a1a1a"/></svg>
<div class="a" style="left:1508px;top:430.5px;width:12px;height:12px;background:#000;border-radius:50%;"></div>
<div class="a" style="left:1508px;top:447.7px;width:12px;height:12px;background:#000;border-radius:50%;"></div>
<div class="a" style="left:1508px;top:464.9px;width:12px;height:12px;background:#000;border-radius:50%;"></div>
<div class="a" style="left:1508px;top:482.1px;width:12px;height:12px;background:#000;border-radius:50%;"></div>
<div class="a" style="left:1508px;top:499.3px;width:12px;height:12px;background:#000;border-radius:50%;"></div>
<div class="a" style="left:1508px;top:516.5px;width:12px;height:12px;background:#000;border-radius:50%;"></div>
<div class="a" style="left:1508px;top:533.7px;width:12px;height:12px;background:#000;border-radius:50%;"></div>
<div class="a" style="left:1508px;top:550.9px;width:12px;height:12px;background:#000;border-radius:50%;"></div>
<div class="a" style="left:1508px;top:568.1px;width:12px;height:12px;background:#000;border-radius:50%;"></div>
<div class="a" style="left:1508px;top:585.3px;width:12px;height:12px;background:#000;border-radius:50%;"></div>
<div class="a" style="left:953px;top:617px;width:188px;height:186px;background:#5b87e3;"></div>
<div class="a" style="left:1140.5px;top:617px;width:3.5px;height:186px;background:#1a1a1a;"></div>
<div class="a" style="left:1144px;top:617px;width:148px;height:186px;background:#3b3b3b;"></div>
<div class="a" style="left:1292px;top:617px;width:4px;height:186px;background:#1e1e1e;"></div>
<div class="a" style="left:1296px;top:617px;width:230px;height:186px;background:linear-gradient(90deg,#383838 0%,#383838 86%,#2c2c2c 100%);"></div>
<svg class="a" style="left:959px;top:622px;" width="28" height="28" viewBox="0 0 28 28"><ellipse cx="13.6" cy="13" rx="11.8" ry="12.2" fill="none" stroke="rgba(0,0,0,0.72)" stroke-width="1.8"/><polygon points="7.5,10 19.5,10 13.5,19" fill="rgba(0,0,0,0.62)"/></svg>
<div class="t" style="left:999.50px;top:625.28px;font-size:20.72px;line-height:20.72px;font-weight:normal;color:#121212;font-family:'Liberation Sans', sans-serif;transform:scaleX(1.045);transform-origin:left top;letter-spacing:0.6px;-webkit-text-stroke:0.25px #121212;">3 Audio</div>
<div class="a" style="left:1148px;top:622.5px;width:139.7px;height:26.6px;background:#000;"></div>
<div class="a" style="left:1149.5px;top:624.0px;width:136.7px;height:23.6px;background:#1f1f1f;"></div>
<div class="t" style="left:1152.00px;top:624.95px;font-size:22.17px;line-height:22.17px;font-weight:bold;color:#e4e4e4;font-family:'Liberation Sans', sans-serif;transform:scaleX(0.935);transform-origin:left top;">Ext. In</div>
<div class="a" style="left:1267.7px;top:624.0px;width:18.5px;height:23.6px;background:#1f1f1f;"></div>
<svg class="a" style="left:1269.7px;top:630.0px;" width="15" height="12" viewBox="0 0 15 12"><polygon points="0.5,0.5 14.5,0.5 7.5,11" fill="#e4e4e4"/></svg>
<div class="a" style="left:1148px;top:659px;width:139.7px;height:27px;background:#000;"></div>
<div class="a" style="left:1149.5px;top:660.5px;width:136.7px;height:24px;background:#1f1f1f;"></div>
<div class="t" style="left:1152.00px;top:661.45px;font-size:22.17px;line-height:22.17px;font-weight:normal;color:#8a8a8a;font-family:'Liberation Sans', sans-serif;transform:scaleX(0.89);transform-origin:left top;">1</div>
<div class="a" style="left:1267.7px;top:660.5px;width:18.5px;height:24px;background:#1f1f1f;"></div>
<svg class="a" style="left:1269.7px;top:666.5px;" width="15" height="12" viewBox="0 0 15 12"><polygon points="0.5,0.5 14.5,0.5 7.5,11" fill="#8a8a8a"/></svg>
<div class="a" style="left:1148px;top:695.5px;width:34px;height:27px;background:#000;"></div>
<div class="a" style="left:1149.5px;top:697.0px;width:31px;height:24px;background:#464646;"></div>
<div class="t" style="left:664.50px;width:1000px;text-align:center;top:698.49px;font-size:23.19px;line-height:23.19px;font-weight:normal;color:#8a8a8a;font-family:'Liberation Sans', sans-serif;-webkit-text-stroke:0.35px #8a8a8a;">In</div>
<div class="a" style="left:1188.4px;top:695.5px;width:53.3px;height:27px;background:#000;"></div>
<div class="a" style="left:1189.9px;top:697.0px;width:50.3px;height:24px;background:#464646;"></div>
<div class="t" style="left:715.00px;width:1000px;text-align:center;top:698.49px;font-size:23.19px;line-height:23.19px;font-weight:normal;color:#8a8a8a;font-family:'Liberation Sans', sans-serif;-webkit-text-stroke:0.35px #8a8a8a;">Auto</div>
<div class="a" style="left:1248px;top:695.5px;width:39.7px;height:27px;background:#000;"></div>
<div class="a" style="left:1249.5px;top:697.0px;width:36.7px;height:24px;background:#8c8c8c;"></div>
<div class="t" style="left:768.40px;width:1000px;text-align:center;top:698.49px;font-size:23.19px;line-height:23.19px;font-weight:normal;color:#111;font-family:'Liberation Sans', sans-serif;transform:scaleX(1.08);transform-origin:center top;-webkit-text-stroke:0.35px #111;">Off</div>
<div class="a" style="left:1148px;top:732.3px;width:139.7px;height:27px;background:#000;"></div>
<div class="a" style="left:1149.5px;top:733.8px;width:136.7px;height:24px;background:#1f1f1f;"></div>
<div class="t" style="left:1152.00px;top:734.75px;font-size:22.17px;line-height:22.17px;font-weight:bold;color:#e4e4e4;font-family:'Liberation Sans', sans-serif;transform:scaleX(0.965);transform-origin:left top;">Master</div>
<div class="a" style="left:1267.7px;top:733.8px;width:18.5px;height:24px;background:#1f1f1f;"></div>
<svg class="a" style="left:1269.7px;top:739.8px;" width="15" height="12" viewBox="0 0 15 12"><polygon points="0.5,0.5 14.5,0.5 7.5,11" fill="#e4e4e4"/></svg>
<div class="a" style="left:1148px;top:769.2px;width:139.7px;height:26.6px;background:#000;"></div>
<div class="a" style="left:1149.5px;top:770.7px;width:136.7px;height:23.6px;background:#373737;"></div>
<div class="a" style="left:1302px;top:622.4px;width:91.6px;height:26.6px;background:#000;"></div>
<div class="a" style="left:1303.5px;top:623.9px;width:88.6px;height:23.6px;background:#f0963a;"></div>
<div class="t" style="left:847.80px;width:1000px;text-align:center;top:624.56px;font-size:22.46px;line-height:22.46px;font-weight:normal;color:#111;font-family:'Liberation Sans', sans-serif;transform:scaleX(0.9);transform-origin:center top;-webkit-text-stroke:0.35px #111;">3</div>
<div class="a" style="left:1402.2px;top:622.4px;width:41.5px;height:26.6px;background:#000;"></div>
<div class="a" style="left:1403.7px;top:623.9px;width:38.5px;height:23.6px;background:#474747;"></div>
<div class="t" style="left:922.95px;width:1000px;text-align:center;top:623.89px;font-size:23.19px;line-height:23.19px;font-weight:bold;color:#e0e0e0;font-family:'Liberation Sans', sans-serif;transform:scaleX(0.9);transform-origin:center top;">S</div>
<div class="a" style="left:1452.2px;top:622.4px;width:41.5px;height:26.6px;background:#000;"></div>
<div class="a" style="left:1453.7px;top:623.9px;width:38.5px;height:23.6px;background:#474747;"></div>
<div class="a" style="left:1466px;top:628.7px;width:14px;height:15px;background:#8c8c8c;border-radius:50%;"></div>
<div class="a" style="left:1302px;top:658.7px;width:91.6px;height:27px;background:#000;"></div>
<div class="a" style="left:1303.5px;top:660.2px;width:88.6px;height:24px;background:#1f1f1f;"></div>
<div class="a" style="left:1303.5px;top:660.2px;width:75.4px;height:24px;background:#22737f;"></div>
<div class="t" style="left:847.50px;width:1000px;text-align:center;top:661.01px;font-size:22.46px;line-height:22.46px;font-weight:normal;color:#e6e6e6;font-family:'Liberation Sans', sans-serif;transform:scaleX(0.92);transform-origin:center top;-webkit-text-stroke:0.4px #e6e6e6;">0</div>
<div class="a" style="left:1402.2px;top:658.7px;width:91.6px;height:27px;background:#000;"></div>
<div class="a" style="left:1403.7px;top:660.2px;width:88.6px;height:24px;background:#1f1f1f;"></div>
<div class="t" style="left:948.00px;width:1000px;text-align:center;top:661.01px;font-size:22.46px;line-height:22.46px;font-weight:bold;color:#e6e6e6;font-family:'Liberation Sans', sans-serif;transform:scaleX(0.92);transform-origin:center top;">C</div>
<div class="a" style="left:1302.1px;top:695.1px;width:59.5px;height:27.7px;background:#000;"></div>
<div class="a" style="left:1303.6px;top:696.6px;width:56.5px;height:24.7px;background:#1f1f1f;"></div>
<div class="t" style="left:831.40px;width:1000px;text-align:center;top:698.01px;font-size:22.46px;line-height:22.46px;font-weight:bold;color:#e6e6e6;font-family:'Liberation Sans', sans-serif;transform:scaleX(1.01);transform-origin:center top;">-inf</div>
<div class="a" style="left:1368.3px;top:695.1px;width:59.5px;height:27.7px;background:#000;"></div>
<div class="a" style="left:1369.8px;top:696.6px;width:56.5px;height:24.7px;background:#1f1f1f;"></div>
<div class="t" style="left:897.60px;width:1000px;text-align:center;top:698.01px;font-size:22.46px;line-height:22.46px;font-weight:bold;color:#e6e6e6;font-family:'Liberation Sans', sans-serif;transform:scaleX(1.01);transform-origin:center top;">-inf</div>
<div class="a" style="left:1506px;top:619.8px;width:6.2px;height:16.4px;background:#000;"></div>
<div class="a" style="left:1514px;top:619.8px;width:6.2px;height:16.4px;background:#000;"></div>
<div class="a" style="left:1506px;top:639px;width:6.2px;height:164px;background:#000;"></div>
<div class="a" style="left:1514px;top:639px;width:6.2px;height:164px;background:#000;"></div>
<div class="a" style="left:953px;top:807px;width:188px;height:186px;background:#d874e3;"></div>
<div class="a" style="left:1140.5px;top:807px;width:3.5px;height:186px;background:#1a1a1a;"></div>
<div class="a" style="left:1144px;top:807px;width:148px;height:186px;background:#3b3b3b;"></div>
<div class="a" style="left:1292px;top:807px;width:4px;height:186px;background:#1e1e1e;"></div>
<div class="a" style="left:1296px;top:807px;width:230px;height:186px;background:linear-gradient(90deg,#383838 0%,#383838 86%,#2c2c2c 100%);"></div>
<svg class="a" style="left:959px;top:812px;" width="28" height="28" viewBox="0 0 28 28"><ellipse cx="13.6" cy="13" rx="11.8" ry="12.2" fill="none" stroke="rgba(0,0,0,0.72)" stroke-width="1.8"/><polygon points="7.5,10 19.5,10 13.5,19" fill="rgba(0,0,0,0.62)"/></svg>
<div class="t" style="left:999.50px;top:815.28px;font-size:20.72px;line-height:20.72px;font-weight:normal;color:#121212;font-family:'Liberation Sans', sans-serif;transform:scaleX(1.045);transform-origin:left top;letter-spacing:0.6px;-webkit-text-stroke:0.25px #121212;">4 Audio</div>
<div class="a" style="left:1148px;top:812.5px;width:139.7px;height:26.6px;background:#000;"></div>
<div class="a" style="left:1149.5px;top:814.0px;width:136.7px;height:23.6px;background:#1f1f1f;"></div>
<div class="t" style="left:1152.00px;top:814.95px;font-size:22.17px;line-height:22.17px;font-weight:bold;color:#e4e4e4;font-family:'Liberation Sans', sans-serif;transform:scaleX(0.935);transform-origin:left top;">Ext. In</div>
<div class="a" style="left:1267.7px;top:814.0px;width:18.5px;height:23.6px;background:#1f1f1f;"></div>
<svg class="a" style="left:1269.7px;top:820.0px;" width="15" height="12" viewBox="0 0 15 12"><polygon points="0.5,0.5 14.5,0.5 7.5,11" fill="#e4e4e4"/></svg>
<div class="a" style="left:1148px;top:849px;width:139.7px;height:27px;background:#000;"></div>
<div class="a" style="left:1149.5px;top:850.5px;width:136.7px;height:24px;background:#1f1f1f;"></div>
<div class="t" style="left:1152.00px;top:851.45px;font-size:22.17px;line-height:22.17px;font-weight:normal;color:#8a8a8a;font-family:'Liberation Sans', sans-serif;transform:scaleX(0.89);transform-origin:left top;">2</div>
<div class="a" style="left:1267.7px;top:850.5px;width:18.5px;height:24px;background:#1f1f1f;"></div>
<svg class="a" style="left:1269.7px;top:856.5px;" width="15" height="12" viewBox="0 0 15 12"><polygon points="0.5,0.5 14.5,0.5 7.5,11" fill="#8a8a8a"/></svg>
<div class="a" style="left:1148px;top:885.5px;width:34px;height:27px;background:#000;"></div>
<div class="a" style="left:1149.5px;top:887.0px;width:31px;height:24px;background:#464646;"></div>
<div class="t" style="left:664.50px;width:1000px;text-align:center;top:888.49px;font-size:23.19px;line-height:23.19px;font-weight:normal;color:#8a8a8a;font-family:'Liberation Sans', sans-serif;-webkit-text-stroke:0.35px #8a8a8a;">In</div>
<div class="a" style="left:1188.4px;top:885.5px;width:53.3px;height:27px;background:#000;"></div>
<div class="a" style="left:1189.9px;top:887.0px;width:50.3px;height:24px;background:#464646;"></div>
<div class="t" style="left:715.00px;width:1000px;text-align:center;top:888.49px;font-size:23.19px;line-height:23.19px;font-weight:normal;color:#8a8a8a;font-family:'Liberation Sans', sans-serif;-webkit-text-stroke:0.35px #8a8a8a;">Auto</div>
<div class="a" style="left:1248px;top:885.5px;width:39.7px;height:27px;background:#000;"></div>
<div class="a" style="left:1249.5px;top:887.0px;width:36.7px;height:24px;background:#8c8c8c;"></div>
<div class="t" style="left:768.40px;width:1000px;text-align:center;top:888.49px;font-size:23.19px;line-height:23.19px;font-weight:normal;color:#111;font-family:'Liberation Sans', sans-serif;transform:scaleX(1.08);transform-origin:center top;-webkit-text-stroke:0.35px #111;">Off</div>
<div class="a" style="left:1148px;top:922.3px;width:139.7px;height:27px;background:#000;"></div>
<div class="a" style="left:1149.5px;top:923.8px;width:136.7px;height:24px;background:#1f1f1f;"></div>
<div class="t" style="left:1152.00px;top:924.75px;font-size:22.17px;line-height:22.17px;font-weight:bold;color:#e4e4e4;font-family:'Liberation Sans', sans-serif;transform:scaleX(0.965);transform-origin:left top;">Master</div>
<div class="a" style="left:1267.7px;top:923.8px;width:18.5px;height:24px;background:#1f1f1f;"></div>
<svg class="a" style="left:1269.7px;top:929.8px;" width="15" height="12" viewBox="0 0 15 12"><polygon points="0.5,0.5 14.5,0.5 7.5,11" fill="#e4e4e4"/></svg>
<div class="a" style="left:1148px;top:959.2px;width:139.7px;height:26.6px;background:#000;"></div>
<div class="a" style="left:1149.5px;top:960.7px;width:136.7px;height:23.6px;background:#373737;"></div>
<div class="a" style="left:1302px;top:812.4px;width:91.6px;height:26.6px;background:#000;"></div>
<div class="a" style="left:1303.5px;top:813.9px;width:88.6px;height:23.6px;background:#f0963a;"></div>
<div class="t" style="left:847.80px;width:1000px;text-align:center;top:814.56px;font-size:22.46px;line-height:22.46px;font-weight:normal;color:#111;font-family:'Liberation Sans', sans-serif;transform:scaleX(0.9);transform-origin:center top;-webkit-text-stroke:0.35px #111;">4</div>
<div class="a" style="left:1402.2px;top:812.4px;width:41.5px;height:26.6px;background:#000;"></div>
<div class="a" style="left:1403.7px;top:813.9px;width:38.5px;height:23.6px;background:#474747;"></div>
<div class="t" style="left:922.95px;width:1000px;text-align:center;top:813.89px;font-size:23.19px;line-height:23.19px;font-weight:bold;color:#e0e0e0;font-family:'Liberation Sans', sans-serif;transform:scaleX(0.9);transform-origin:center top;">S</div>
<div class="a" style="left:1452.2px;top:812.4px;width:41.5px;height:26.6px;background:#000;"></div>
<div class="a" style="left:1453.7px;top:813.9px;width:38.5px;height:23.6px;background:#474747;"></div>
<div class="a" style="left:1466px;top:818.7px;width:14px;height:15px;background:#8c8c8c;border-radius:50%;"></div>
<div class="a" style="left:1302px;top:848.7px;width:91.6px;height:27px;background:#000;"></div>
<div class="a" style="left:1303.5px;top:850.2px;width:88.6px;height:24px;background:#1f1f1f;"></div>
<div class="a" style="left:1303.5px;top:850.2px;width:75.4px;height:24px;background:#22737f;"></div>
<div class="t" style="left:847.50px;width:1000px;text-align:center;top:851.01px;font-size:22.46px;line-height:22.46px;font-weight:normal;color:#e6e6e6;font-family:'Liberation Sans', sans-serif;transform:scaleX(0.92);transform-origin:center top;-webkit-text-stroke:0.4px #e6e6e6;">0</div>
<div class="a" style="left:1402.2px;top:848.7px;width:91.6px;height:27px;background:#000;"></div>
<div class="a" style="left:1403.7px;top:850.2px;width:88.6px;height:24px;background:#1f1f1f;"></div>
<div class="t" style="left:948.00px;width:1000px;text-align:center;top:851.01px;font-size:22.46px;line-height:22.46px;font-weight:bold;color:#e6e6e6;font-family:'Liberation Sans', sans-serif;transform:scaleX(0.92);transform-origin:center top;">C</div>
<div class="a" style="left:1302.1px;top:885.1px;width:59.5px;height:27.7px;background:#000;"></div>
<div class="a" style="left:1303.6px;top:886.6px;width:56.5px;height:24.7px;background:#1f1f1f;"></div>
<div class="t" style="left:831.40px;width:1000px;text-align:center;top:888.01px;font-size:22.46px;line-height:22.46px;font-weight:bold;color:#e6e6e6;font-family:'Liberation Sans', sans-serif;transform:scaleX(1.01);transform-origin:center top;">-inf</div>
<div class="a" style="left:1368.3px;top:885.1px;width:59.5px;height:27.7px;background:#000;"></div>
<div class="a" style="left:1369.8px;top:886.6px;width:56.5px;height:24.7px;background:#1f1f1f;"></div>
<div class="t" style="left:897.60px;width:1000px;text-align:center;top:888.01px;font-size:22.46px;line-height:22.46px;font-weight:bold;color:#e6e6e6;font-family:'Liberation Sans', sans-serif;transform:scaleX(1.01);transform-origin:center top;">-inf</div>
<div class="a" style="left:1506px;top:809.8px;width:6.2px;height:16.4px;background:#000;"></div>
<div class="a" style="left:1514px;top:809.8px;width:6.2px;height:16.4px;background:#000;"></div>
<div class="a" style="left:1506px;top:829px;width:6.2px;height:164px;background:#000;"></div>
<div class="a" style="left:1514px;top:829px;width:6.2px;height:164px;background:#000;"></div>
<div class="a" style="left:953px;top:997px;width:188px;height:186px;background:#d874e3;"></div>
<div class="a" style="left:1140.5px;top:997px;width:3.5px;height:186px;background:#1a1a1a;"></div>
<div class="a" style="left:1144px;top:997px;width:148px;height:186px;background:#484848;"></div>
<div class="a" style="left:1292px;top:997px;width:4px;height:186px;background:#1e1e1e;"></div>
<div class="a" style="left:1296px;top:997px;width:230px;height:186px;background:linear-gradient(90deg,#474747 0%,#474747 86%,#2c2c2c 100%);"></div>
<svg class="a" style="left:959px;top:1002px;" width="28" height="28" viewBox="0 0 28 28"><ellipse cx="13.6" cy="13" rx="11.8" ry="12.2" fill="none" stroke="rgba(0,0,0,0.72)" stroke-width="1.8"/><polygon points="7.5,10 19.5,10 13.5,19" fill="rgba(0,0,0,0.62)"/></svg>
<div class="t" style="left:999.50px;top:1005.28px;font-size:20.72px;line-height:20.72px;font-weight:normal;color:#121212;font-family:'Liberation Sans', sans-serif;transform:scaleX(1.045);transform-origin:left top;letter-spacing:0.6px;-webkit-text-stroke:0.25px #121212;">5 Audio</div>
<div class="a" style="left:1148px;top:1002.5px;width:139.7px;height:26.6px;background:#000;"></div>
<div class="a" style="left:1149.5px;top:1004.0px;width:136.7px;height:23.6px;background:#1f1f1f;"></div>
<div class="t" style="left:1152.00px;top:1004.95px;font-size:22.17px;line-height:22.17px;font-weight:bold;color:#e4e4e4;font-family:'Liberation Sans', sans-serif;transform:scaleX(0.935);transform-origin:left top;">Ext. In</div>
<div class="a" style="left:1267.7px;top:1004.0px;width:18.5px;height:23.6px;background:#1f1f1f;"></div>
<svg class="a" style="left:1269.7px;top:1010.0px;" width="15" height="12" viewBox="0 0 15 12"><polygon points="0.5,0.5 14.5,0.5 7.5,11" fill="#e4e4e4"/></svg>
<div class="a" style="left:1148px;top:1039px;width:139.7px;height:27px;background:#000;"></div>
<div class="a" style="left:1149.5px;top:1040.5px;width:136.7px;height:24px;background:#1f1f1f;"></div>
<div class="t" style="left:1152.00px;top:1041.45px;font-size:22.17px;line-height:22.17px;font-weight:normal;color:#8a8a8a;font-family:'Liberation Sans', sans-serif;transform:scaleX(0.89);transform-origin:left top;">2</div>
<div class="a" style="left:1267.7px;top:1040.5px;width:18.5px;height:24px;background:#1f1f1f;"></div>
<svg class="a" style="left:1269.7px;top:1046.5px;" width="15" height="12" viewBox="0 0 15 12"><polygon points="0.5,0.5 14.5,0.5 7.5,11" fill="#8a8a8a"/></svg>
<div class="a" style="left:1148px;top:1075.5px;width:34px;height:27px;background:#000;"></div>
<div class="a" style="left:1149.5px;top:1077.0px;width:31px;height:24px;background:#464646;"></div>
<div class="t" style="left:664.50px;width:1000px;text-align:center;top:1078.49px;font-size:23.19px;line-height:23.19px;font-weight:normal;color:#8a8a8a;font-family:'Liberation Sans', sans-serif;-webkit-text-stroke:0.35px #8a8a8a;">In</div>
<div class="a" style="left:1188.4px;top:1075.5px;width:53.3px;height:27px;background:#000;"></div>
<div class="a" style="left:1189.9px;top:1077.0px;width:50.3px;height:24px;background:#464646;"></div>
<div class="t" style="left:715.00px;width:1000px;text-align:center;top:1078.49px;font-size:23.19px;line-height:23.19px;font-weight:normal;color:#8a8a8a;font-family:'Liberation Sans', sans-serif;-webkit-text-stroke:0.35px #8a8a8a;">Auto</div>
<div class="a" style="left:1248px;top:1075.5px;width:39.7px;height:27px;background:#000;"></div>
<div class="a" style="left:1249.5px;top:1077.0px;width:36.7px;height:24px;background:#8c8c8c;"></div>
<div class="t" style="left:768.40px;width:1000px;text-align:center;top:1078.49px;font-size:23.19px;line-height:23.19px;font-weight:normal;color:#111;font-family:'Liberation Sans', sans-serif;transform:scaleX(1.08);transform-origin:center top;-webkit-text-stroke:0.35px #111;">Off</div>
<div class="a" style="left:1148px;top:1112.3px;width:139.7px;height:27px;background:#000;"></div>
<div class="a" style="left:1149.5px;top:1113.8px;width:136.7px;height:24px;background:#1f1f1f;"></div>
<div class="t" style="left:1152.00px;top:1114.75px;font-size:22.17px;line-height:22.17px;font-weight:bold;color:#e4e4e4;font-family:'Liberation Sans', sans-serif;transform:scaleX(0.965);transform-origin:left top;">Master</div>
<div class="a" style="left:1267.7px;top:1113.8px;width:18.5px;height:24px;background:#1f1f1f;"></div>
<svg class="a" style="left:1269.7px;top:1119.8px;" width="15" height="12" viewBox="0 0 15 12"><polygon points="0.5,0.5 14.5,0.5 7.5,11" fill="#e4e4e4"/></svg>
<div class="a" style="left:1148px;top:1149.2px;width:139.7px;height:26.6px;background:#000;"></div>
<div class="a" style="left:1149.5px;top:1150.7px;width:136.7px;height:23.6px;background:#3e3e3e;"></div>
<div class="a" style="left:1302px;top:1002.4px;width:91.6px;height:26.6px;background:#000;"></div>
<div class="a" style="left:1303.5px;top:1003.9px;width:88.6px;height:23.6px;background:#f0963a;"></div>
<div class="t" style="left:847.80px;width:1000px;text-align:center;top:1004.56px;font-size:22.46px;line-height:22.46px;font-weight:normal;color:#111;font-family:'Liberation Sans', sans-serif;transform:scaleX(0.9);transform-origin:center top;-webkit-text-stroke:0.35px #111;">5</div>
<div class="a" style="left:1402.2px;top:1002.4px;width:41.5px;height:26.6px;background:#000;"></div>
<div class="a" style="left:1403.7px;top:1003.9px;width:38.5px;height:23.6px;background:#474747;"></div>
<div class="t" style="left:922.95px;width:1000px;text-align:center;top:1003.89px;font-size:23.19px;line-height:23.19px;font-weight:bold;color:#e0e0e0;font-family:'Liberation Sans', sans-serif;transform:scaleX(0.9);transform-origin:center top;">S</div>
<div class="a" style="left:1452.2px;top:1002.4px;width:41.5px;height:26.6px;background:#000;"></div>
<div class="a" style="left:1453.7px;top:1003.9px;width:38.5px;height:23.6px;background:#474747;"></div>
<div class="a" style="left:1466px;top:1008.7px;width:14px;height:15px;background:#8c8c8c;border-radius:50%;"></div>
<div class="a" style="left:1302px;top:1038.7px;width:91.6px;height:27px;background:#000;"></div>
<div class="a" style="left:1303.5px;top:1040.2px;width:88.6px;height:24px;background:#1f1f1f;"></div>
<div class="a" style="left:1303.5px;top:1040.2px;width:75.4px;height:24px;background:#22737f;"></div>
<div class="t" style="left:847.50px;width:1000px;text-align:center;top:1041.01px;font-size:22.46px;line-height:22.46px;font-weight:normal;color:#e6e6e6;font-family:'Liberation Sans', sans-serif;transform:scaleX(0.92);transform-origin:center top;-webkit-text-stroke:0.4px #e6e6e6;">0</div>
<div class="a" style="left:1402.2px;top:1038.7px;width:91.6px;height:27px;background:#000;"></div>
<div class="a" style="left:1403.7px;top:1040.2px;width:88.6px;height:24px;background:#1f1f1f;"></div>
<div class="t" style="left:948.00px;width:1000px;text-align:center;top:1041.01px;font-size:22.46px;line-height:22.46px;font-weight:bold;color:#e6e6e6;font-family:'Liberation Sans', sans-serif;transform:scaleX(0.92);transform-origin:center top;">C</div>
<div class="a" style="left:1302.1px;top:1075.1px;width:59.5px;height:27.7px;background:#000;"></div>
<div class="a" style="left:1303.6px;top:1076.6px;width:56.5px;height:24.7px;background:#1f1f1f;"></div>
<div class="t" style="left:831.40px;width:1000px;text-align:center;top:1078.01px;font-size:22.46px;line-height:22.46px;font-weight:bold;color:#e6e6e6;font-family:'Liberation Sans', sans-serif;transform:scaleX(1.01);transform-origin:center top;">-inf</div>
<div class="a" style="left:1368.3px;top:1075.1px;width:59.5px;height:27.7px;background:#000;"></div>
<div class="a" style="left:1369.8px;top:1076.6px;width:56.5px;height:24.7px;background:#1f1f1f;"></div>
<div class="t" style="left:897.60px;width:1000px;text-align:center;top:1078.01px;font-size:22.46px;line-height:22.46px;font-weight:bold;color:#e6e6e6;font-family:'Liberation Sans', sans-serif;transform:scaleX(1.01);transform-origin:center top;">-inf</div>
<div class="a" style="left:1506px;top:999.8px;width:6.2px;height:16.4px;background:#000;"></div>
<div class="a" style="left:1514px;top:999.8px;width:6.2px;height:16.4px;background:#000;"></div>
<div class="a" style="left:1506px;top:1019px;width:6.2px;height:164px;background:#000;"></div>
<div class="a" style="left:1514px;top:1019px;width:6.2px;height:164px;background:#000;"></div>
<div class="a" style="left:953px;top:1187px;width:188px;height:186px;background:#d874e3;"></div>
<div class="a" style="left:1140.5px;top:1187px;width:3.5px;height:186px;background:#1a1a1a;"></div>
<div class="a" style="left:1144px;top:1187px;width:148px;height:186px;background:#3b3b3b;"></div>
<div class="a" style="left:1292px;top:1187px;width:4px;height:186px;background:#1e1e1e;"></div>
<div class="a" style="left:1296px;top:1187px;width:230px;height:186px;background:linear-gradient(90deg,#383838 0%,#383838 86%,#2c2c2c 100%);"></div>
<svg class="a" style="left:959px;top:1192px;" width="28" height="28" viewBox="0 0 28 28"><ellipse cx="13.6" cy="13" rx="11.8" ry="12.2" fill="none" stroke="rgba(0,0,0,0.72)" stroke-width="1.8"/><polygon points="7.5,10 19.5,10 13.5,19" fill="rgba(0,0,0,0.62)"/></svg>
<div class="t" style="left:999.50px;top:1195.28px;font-size:20.72px;line-height:20.72px;font-weight:normal;color:#121212;font-family:'Liberation Sans', sans-serif;transform:scaleX(1.045);transform-origin:left top;letter-spacing:0.6px;-webkit-text-stroke:0.25px #121212;">6 Audio</div>
<div class="a" style="left:1148px;top:1192.5px;width:139.7px;height:26.6px;background:#000;"></div>
<div class="a" style="left:1149.5px;top:1194.0px;width:136.7px;height:23.6px;background:#1f1f1f;"></div>
<div class="t" style="left:1152.00px;top:1194.95px;font-size:22.17px;line-height:22.17px;font-weight:bold;color:#e4e4e4;font-family:'Liberation Sans', sans-serif;transform:scaleX(0.935);transform-origin:left top;">Ext. In</div>
<div class="a" style="left:1267.7px;top:1194.0px;width:18.5px;height:23.6px;background:#1f1f1f;"></div>
<svg class="a" style="left:1269.7px;top:1200.0px;" width="15" height="12" viewBox="0 0 15 12"><polygon points="0.5,0.5 14.5,0.5 7.5,11" fill="#e4e4e4"/></svg>
<div class="a" style="left:1148px;top:1229px;width:139.7px;height:27px;background:#000;"></div>
<div class="a" style="left:1149.5px;top:1230.5px;width:136.7px;height:24px;background:#1f1f1f;"></div>
<div class="t" style="left:1152.00px;top:1231.45px;font-size:22.17px;line-height:22.17px;font-weight:normal;color:#8a8a8a;font-family:'Liberation Sans', sans-serif;transform:scaleX(0.89);transform-origin:left top;">2</div>
<div class="a" style="left:1267.7px;top:1230.5px;width:18.5px;height:24px;background:#1f1f1f;"></div>
<svg class="a" style="left:1269.7px;top:1236.5px;" width="15" height="12" viewBox="0 0 15 12"><polygon points="0.5,0.5 14.5,0.5 7.5,11" fill="#8a8a8a"/></svg>
<div class="a" style="left:1148px;top:1265.5px;width:34px;height:27px;background:#000;"></div>
<div class="a" style="left:1149.5px;top:1267.0px;width:31px;height:24px;background:#464646;"></div>
<div class="t" style="left:664.50px;width:1000px;text-align:center;top:1268.49px;font-size:23.19px;line-height:23.19px;font-weight:normal;color:#8a8a8a;font-family:'Liberation Sans', sans-serif;-webkit-text-stroke:0.35px #8a8a8a;">In</div>
<div class="a" style="left:1188.4px;top:1265.5px;width:53.3px;height:27px;background:#000;"></div>
<div class="a" style="left:1189.9px;top:1267.0px;width:50.3px;height:24px;background:#464646;"></div>
<div class="t" style="left:715.00px;width:1000px;text-align:center;top:1268.49px;font-size:23.19px;line-height:23.19px;font-weight:normal;color:#8a8a8a;font-family:'Liberation Sans', sans-serif;-webkit-text-stroke:0.35px #8a8a8a;">Auto</div>
<div class="a" style="left:1248px;top:1265.5px;width:39.7px;height:27px;background:#000;"></div>
<div class="a" style="left:1249.5px;top:1267.0px;width:36.7px;height:24px;background:#8c8c8c;"></div>
<div class="t" style="left:768.40px;width:1000px;text-align:center;top:1268.49px;font-size:23.19px;line-height:23.19px;font-weight:normal;color:#111;font-family:'Liberation Sans', sans-serif;transform:scaleX(1.08);transform-origin:center top;-webkit-text-stroke:0.35px #111;">Off</div>
<div class="a" style="left:1148px;top:1302.3px;width:139.7px;height:27px;background:#000;"></div>
<div class="a" style="left:1149.5px;top:1303.8px;width:136.7px;height:24px;background:#1f1f1f;"></div>
<div class="t" style="left:1152.00px;top:1304.75px;font-size:22.17px;line-height:22.17px;font-weight:bold;color:#e4e4e4;font-family:'Liberation Sans', sans-serif;transform:scaleX(0.965);transform-origin:left top;">Master</div>
<div class="a" style="left:1267.7px;top:1303.8px;width:18.5px;height:24px;background:#1f1f1f;"></div>
<svg class="a" style="left:1269.7px;top:1309.8px;" width="15" height="12" viewBox="0 0 15 12"><polygon points="0.5,0.5 14.5,0.5 7.5,11" fill="#e4e4e4"/></svg>
<div class="a" style="left:1148px;top:1339.2px;width:139.7px;height:26.6px;background:#000;"></div>
<div class="a" style="left:1149.5px;top:1340.7px;width:136.7px;height:23.6px;background:#373737;"></div>
<div class="a" style="left:1302px;top:1192.4px;width:91.6px;height:26.6px;background:#000;"></div>
<div class="a" style="left:1303.5px;top:1193.9px;width:88.6px;height:23.6px;background:#f0963a;"></div>
<div class="t" style="left:847.80px;width:1000px;text-align:center;top:1194.56px;font-size:22.46px;line-height:22.46px;font-weight:normal;color:#111;font-family:'Liberation Sans', sans-serif;transform:scaleX(0.9);transform-origin:center top;-webkit-text-stroke:0.35px #111;">6</div>
<div class="a" style="left:1402.2px;top:1192.4px;width:41.5px;height:26.6px;background:#000;"></div>
<div class="a" style="left:1403.7px;top:1193.9px;width:38.5px;height:23.6px;background:#474747;"></div>
<div class="t" style="left:922.95px;width:1000px;text-align:center;top:1193.89px;font-size:23.19px;line-height:23.19px;font-weight:bold;color:#e0e0e0;font-family:'Liberation Sans', sans-serif;transform:scaleX(0.9);transform-origin:center top;">S</div>
<div class="a" style="left:1452.2px;top:1192.4px;width:41.5px;height:26.6px;background:#000;"></div>
<div class="a" style="left:1453.7px;top:1193.9px;width:38.5px;height:23.6px;background:#474747;"></div>
<div class="a" style="left:1466px;top:1198.7px;width:14px;height:15px;background:#8c8c8c;border-radius:50%;"></div>
<div class="a" style="left:1302px;top:1228.7px;width:91.6px;height:27px;background:#000;"></div>
<div class="a" style="left:1303.5px;top:1230.2px;width:88.6px;height:24px;background:#1f1f1f;"></div>
<div class="a" style="left:1303.5px;top:1230.2px;width:75.4px;height:24px;background:#22737f;"></div>
<div class="t" style="left:847.50px;width:1000px;text-align:center;top:1231.01px;font-size:22.46px;line-height:22.46px;font-weight:normal;color:#e6e6e6;font-family:'Liberation Sans', sans-serif;transform:scaleX(0.92);transform-origin:center top;-webkit-text-stroke:0.4px #e6e6e6;">0</div>
<div class="a" style="left:1402.2px;top:1228.7px;width:91.6px;height:27px;background:#000;"></div>
<div class="a" style="left:1403.7px;top:1230.2px;width:88.6px;height:24px;background:#1f1f1f;"></div>
<div class="t" style="left:948.00px;width:1000px;text-align:center;top:1231.01px;font-size:22.46px;line-height:22.46px;font-weight:bold;color:#e6e6e6;font-family:'Liberation Sans', sans-serif;transform:scaleX(0.92);transform-origin:center top;">C</div>
<div class="a" style="left:1302.1px;top:1265.1px;width:59.5px;height:27.7px;background:#000;"></div>
<div class="a" style="left:1303.6px;top:1266.6px;width:56.5px;height:24.7px;background:#1f1f1f;"></div>
<div class="t" style="left:831.40px;width:1000px;text-align:center;top:1268.01px;font-size:22.46px;line-height:22.46px;font-weight:bold;color:#e6e6e6;font-family:'Liberation Sans', sans-serif;transform:scaleX(1.01);transform-origin:center top;">-inf</div>
<div class="a" style="left:1368.3px;top:1265.1px;width:59.5px;height:27.7px;background:#000;"></div>
<div class="a" style="left:1369.8px;top:1266.6px;width:56.5px;height:24.7px;background:#1f1f1f;"></div>
<div class="t" style="left:897.60px;width:1000px;text-align:center;top:1268.01px;font-size:22.46px;line-height:22.46px;font-weight:bold;color:#e6e6e6;font-family:'Liberation Sans', sans-serif;transform:scaleX(1.01);transform-origin:center top;">-inf</div>
<div class="a" style="left:1506px;top:1189.8px;width:6.2px;height:16.4px;background:#000;"></div>
<div class="a" style="left:1514px;top:1189.8px;width:6.2px;height:16.4px;background:#000;"></div>
<div class="a" style="left:1506px;top:1209px;width:6.2px;height:164px;background:#000;"></div>
<div class="a" style="left:1514px;top:1209px;width:6.2px;height:164px;background:#000;"></div>
<div class="a" style="left:953px;top:1377px;width:188px;height:39px;background:#d874e3;"></div>
<div class="a" style="left:1140.5px;top:1377px;width:3.5px;height:39px;background:#1a1a1a;"></div>
<div class="a" style="left:1144px;top:1377px;width:148px;height:39px;background:#3b3b3b;"></div>
<div class="a" style="left:1292px;top:1377px;width:4px;height:39px;background:#1e1e1e;"></div>
<div class="a" style="left:1296px;top:1377px;width:230px;height:39px;background:linear-gradient(90deg,#383838 0%,#383838 86%,#2c2c2c 100%);"></div>
<svg class="a" style="left:959px;top:1382px;" width="28" height="28" viewBox="0 0 28 28"><ellipse cx="13.6" cy="13" rx="11.8" ry="12.2" fill="none" stroke="rgba(0,0,0,0.72)" stroke-width="1.8"/><polygon points="7.5,10 19.5,10 13.5,19" fill="rgba(0,0,0,0.62)"/></svg>
<div class="t" style="left:999.50px;top:1385.28px;font-size:20.72px;line-height:20.72px;font-weight:normal;color:#121212;font-family:'Liberation Sans', sans-serif;transform:scaleX(1.045);transform-origin:left top;letter-spacing:0.6px;-webkit-text-stroke:0.25px #121212;">7 Audio</div>
<div class="a" style="left:1148px;top:1382.5px;width:139.7px;height:26.6px;background:#000;"></div>
<div class="a" style="left:1149.5px;top:1384.0px;width:136.7px;height:23.6px;background:#1f1f1f;"></div>
<div class="t" style="left:1152.00px;top:1384.95px;font-size:22.17px;line-height:22.17px;font-weight:bold;color:#e4e4e4;font-family:'Liberation Sans', sans-serif;transform:scaleX(0.935);transform-origin:left top;">Ext. In</div>
<div class="a" style="left:1267.7px;top:1384.0px;width:18.5px;height:23.6px;background:#1f1f1f;"></div>
<svg class="a" style="left:1269.7px;top:1390.0px;" width="15" height="12" viewBox="0 0 15 12"><polygon points="0.5,0.5 14.5,0.5 7.5,11" fill="#e4e4e4"/></svg>
<div class="a" style="left:1148px;top:1419px;width:139.7px;height:27px;background:#000;"></div>
<div class="a" style="left:1149.5px;top:1420.5px;width:136.7px;height:24px;background:#1f1f1f;"></div>
<div class="t" style="left:1152.00px;top:1421.45px;font-size:22.17px;line-height:22.17px;font-weight:normal;color:#8a8a8a;font-family:'Liberation Sans', sans-serif;transform:scaleX(0.89);transform-origin:left top;">2</div>
<div class="a" style="left:1267.7px;top:1420.5px;width:18.5px;height:24px;background:#1f1f1f;"></div>
<svg class="a" style="left:1269.7px;top:1426.5px;" width="15" height="12" viewBox="0 0 15 12"><polygon points="0.5,0.5 14.5,0.5 7.5,11" fill="#8a8a8a"/></svg>
<div class="a" style="left:1148px;top:1455.5px;width:34px;height:27px;background:#000;"></div>
<div class="a" style="left:1149.5px;top:1457.0px;width:31px;height:24px;background:#464646;"></div>
<div class="t" style="left:664.50px;width:1000px;text-align:center;top:1458.49px;font-size:23.19px;line-height:23.19px;font-weight:normal;color:#8a8a8a;font-family:'Liberation Sans', sans-serif;-webkit-text-stroke:0.35px #8a8a8a;">In</div>
<div class="a" style="left:1188.4px;top:1455.5px;width:53.3px;height:27px;background:#000;"></div>
<div class="a" style="left:1189.9px;top:1457.0px;width:50.3px;height:24px;background:#464646;"></div>
<div class="t" style="left:715.00px;width:1000px;text-align:center;top:1458.49px;font-size:23.19px;line-height:23.19px;font-weight:normal;color:#8a8a8a;font-family:'Liberation Sans', sans-serif;-webkit-text-stroke:0.35px #8a8a8a;">Auto</div>
<div class="a" style="left:1248px;top:1455.5px;width:39.7px;height:27px;background:#000;"></div>
<div class="a" style="left:1249.5px;top:1457.0px;width:36.7px;height:24px;background:#8c8c8c;"></div>
<div class="t" style="left:768.40px;width:1000px;text-align:center;top:1458.49px;font-size:23.19px;line-height:23.19px;font-weight:normal;color:#111;font-family:'Liberation Sans', sans-serif;transform:scaleX(1.08);transform-origin:center top;-webkit-text-stroke:0.35px #111;">Off</div>
<div class="a" style="left:1148px;top:1492.3px;width:139.7px;height:27px;background:#000;"></div>
<div class="a" style="left:1149.5px;top:1493.8px;width:136.7px;height:24px;background:#1f1f1f;"></div>
<div class="t" style="left:1152.00px;top:1494.75px;font-size:22.17px;line-height:22.17px;font-weight:bold;color:#e4e4e4;font-family:'Liberation Sans', sans-serif;transform:scaleX(0.965);transform-origin:left top;">Master</div>
<div class="a" style="left:1267.7px;top:1493.8px;width:18.5px;height:24px;background:#1f1f1f;"></div>
<svg class="a" style="left:1269.7px;top:1499.8px;" width="15" height="12" viewBox="0 0 15 12"><polygon points="0.5,0.5 14.5,0.5 7.5,11" fill="#e4e4e4"/></svg>
<div class="a" style="left:1148px;top:1529.2px;width:139.7px;height:26.6px;background:#000;"></div>
<div class="a" style="left:1149.5px;top:1530.7px;width:136.7px;height:23.6px;background:#373737;"></div>
<div class="a" style="left:1302px;top:1382.4px;width:91.6px;height:26.6px;background:#000;"></div>
<div class="a" style="left:1303.5px;top:1383.9px;width:88.6px;height:23.6px;background:#f0963a;"></div>
<div class="t" style="left:847.80px;width:1000px;text-align:center;top:1384.56px;font-size:22.46px;line-height:22.46px;font-weight:normal;color:#111;font-family:'Liberation Sans', sans-serif;transform:scaleX(0.9);transform-origin:center top;-webkit-text-stroke:0.35px #111;">7</div>
<div class="a" style="left:1402.2px;top:1382.4px;width:41.5px;height:26.6px;background:#000;"></div>
<div class="a" style="left:1403.7px;top:1383.9px;width:38.5px;height:23.6px;background:#474747;"></div>
<div class="t" style="left:922.95px;width:1000px;text-align:center;top:1383.89px;font-size:23.19px;line-height:23.19px;font-weight:bold;color:#e0e0e0;font-family:'Liberation Sans', sans-serif;transform:scaleX(0.9);transform-origin:center top;">S</div>
<div class="a" style="left:1452.2px;top:1382.4px;width:41.5px;height:26.6px;background:#000;"></div>
<div class="a" style="left:1453.7px;top:1383.9px;width:38.5px;height:23.6px;background:#474747;"></div>
<div class="a" style="left:1466px;top:1388.7px;width:14px;height:15px;background:#8c8c8c;border-radius:50%;"></div>
<div class="a" style="left:1302px;top:1418.7px;width:91.6px;height:27px;background:#000;"></div>
<div class="a" style="left:1303.5px;top:1420.2px;width:88.6px;height:24px;background:#1f1f1f;"></div>
<div class="a" style="left:1303.5px;top:1420.2px;width:75.4px;height:24px;background:#22737f;"></div>
<div class="t" style="left:847.50px;width:1000px;text-align:center;top:1421.01px;font-size:22.46px;line-height:22.46px;font-weight:normal;color:#e6e6e6;font-family:'Liberation Sans', sans-serif;transform:scaleX(0.92);transform-origin:center top;-webkit-text-stroke:0.4px #e6e6e6;">0</div>
<div class="a" style="left:1402.2px;top:1418.7px;width:91.6px;height:27px;background:#000;"></div>
<div class="a" style="left:1403.7px;top:1420.2px;width:88.6px;height:24px;background:#1f1f1f;"></div>
<div class="t" style="left:948.00px;width:1000px;text-align:center;top:1421.01px;font-size:22.46px;line-height:22.46px;font-weight:bold;color:#e6e6e6;font-family:'Liberation Sans', sans-serif;transform:scaleX(0.92);transform-origin:center top;">C</div>
<div class="a" style="left:1302.1px;top:1455.1px;width:59.5px;height:27.7px;background:#000;"></div>
<div class="a" style="left:1303.6px;top:1456.6px;width:56.5px;height:24.7px;background:#1f1f1f;"></div>
<div class="t" style="left:831.40px;width:1000px;text-align:center;top:1458.01px;font-size:22.46px;line-height:22.46px;font-weight:bold;color:#e6e6e6;font-family:'Liberation Sans', sans-serif;transform:scaleX(1.01);transform-origin:center top;">-inf</div>
<div class="a" style="left:1368.3px;top:1455.1px;width:59.5px;height:27.7px;background:#000;"></div>
<div class="a" style="left:1369.8px;top:1456.6px;width:56.5px;height:24.7px;background:#1f1f1f;"></div>
<div class="t" style="left:897.60px;width:1000px;text-align:center;top:1458.01px;font-size:22.46px;line-height:22.46px;font-weight:bold;color:#e6e6e6;font-family:'Liberation Sans', sans-serif;transform:scaleX(1.01);transform-origin:center top;">-inf</div>
<div class="a" style="left:1506px;top:1379.8px;width:6.2px;height:16.4px;background:#000;"></div>
<div class="a" style="left:1514px;top:1379.8px;width:6.2px;height:16.4px;background:#000;"></div>
<div class="a" style="left:1506px;top:1399px;width:6.2px;height:164px;background:#000;"></div>
<div class="a" style="left:1514px;top:1399px;width:6.2px;height:164px;background:#000;"></div>
<div class="a" style="left:958.3px;top:170.7px;width:59px;height:27.5px;background:#000;border-radius:14px;"></div>
<div class="a" style="left:959.5px;top:171.9px;width:56.6px;height:25.1px;background:#474747;border-radius:13px;"></div>
<div class="t" style="left:487.50px;width:1000px;text-align:center;top:173.16px;font-size:22.75px;line-height:22.75px;font-weight:bold;color:#e2e2e2;font-family:'Liberation Sans', sans-serif;transform:scaleX(0.93);transform-origin:center top;">Set</div>
<div class="a" style="left:958.0px;top:204px;width:25.4px;height:26.3px;background:#000;border-radius:50%;"></div>
<div class="a" style="left:959.1px;top:205.1px;width:23.2px;height:24.1px;background:#474747;border-radius:50%;"></div>
<div class="a" style="left:992.0px;top:204px;width:25.4px;height:26.3px;background:#000;border-radius:50%;"></div>
<div class="a" style="left:993.1px;top:205.1px;width:23.2px;height:24.1px;background:#474747;border-radius:50%;"></div>
<svg class="a" style="left:958px;top:204px;" width="26" height="26" viewBox="0 0 26 26"><polygon points="5.5,13 12.5,6.5 12.5,19.5" fill="#dcdcdc"/><rect x="11" y="11.6" width="8.5" height="2.8" fill="#dcdcdc"/></svg>
<svg class="a" style="left:992px;top:204px;" width="26" height="26" viewBox="0 0 26 26"><polygon points="20.5,13 13.5,6.5 13.5,19.5" fill="#dcdcdc"/><rect x="6.5" y="11.6" width="8.5" height="2.8" fill="#dcdcdc"/></svg>
<div class="a" style="left:1040.6px;top:203.7px;width:45px;height:26.5px;background:#000;"></div>
<div class="a" style="left:1042.3px;top:205.2px;width:41.6px;height:23.5px;background:#474747;"></div>
<div class="a" style="left:1094.4px;top:203.7px;width:45px;height:26.5px;background:#000;"></div>
<div class="a" style="left:1096.1000000000001px;top:205.2px;width:41.6px;height:23.5px;background:#474747;"></div>
<svg class="a" style="left:1040.6px;top:203.7px;" width="45" height="26.5" viewBox="0 0 45 26.5"><circle cx="16.8" cy="19.6" r="3" fill="#d8d8d8"/><circle cx="27.5" cy="8.8" r="3" fill="#d8d8d8"/><path d="M16.8 19.6L27.5 8.8" stroke="#d8d8d8" stroke-width="2"/></svg>
<svg class="a" style="left:1094.4px;top:203.7px;" width="45" height="26.5" viewBox="0 0 45 26.5"><rect x="15.8" y="11.5" width="14.5" height="10.5" fill="#d8d8d8"/><path d="M18.3 12V9.5a4.8 4.8 0 0 1 9.6 0V12" fill="none" stroke="#d8d8d8" stroke-width="2.2"/></svg>
<div class="a" style="left:1579px;top:0;width:587px;height:1416px;background:#000;border-bottom-left-radius:10px;overflow:hidden;">
<svg width="587" height="1416" style="position:absolute;left:0;top:0">
<defs>
<linearGradient id="nv" gradientUnits="userSpaceOnUse" x1="452.96500000000015" y1="350" x2="728.7550000000001" y2="468.08">
<stop offset="0" stop-color="#1222b4" stop-opacity="0.24"/><stop offset="0.08" stop-color="#1222b4" stop-opacity="0.15"/><stop offset="0.3" stop-color="#1222b4" stop-opacity="0.05"/><stop offset="1" stop-color="#1222b4" stop-opacity="0"/>
</linearGradient>
<linearGradient id="vmg" x1="0" y1="0" x2="0" y2="1"><stop offset="0" stop-color="#fff"/><stop offset="0.55" stop-color="#ddd"/><stop offset="1" stop-color="#555"/></linearGradient>
<mask id="vm" maskUnits="userSpaceOnUse" x="0" y="0" width="587" height="1416"><rect x="0" y="0" width="587" height="1416" fill="url(#vmg)"/></mask>
</defs>
<polygon points="602.8000000000002,0 597,0 597,1416 -3.3895999999997457,1416" fill="#19191a"/>
<polygon points="602.8000000000002,0 597,0 597,1416 -3.3895999999997457,1416" fill="url(#nv)" mask="url(#vm)"/>
</svg></div>
<div class="a" style="left:1950.5px;top:240px;width:1.2px;height:1156px;background:rgba(0,0,0,0.55);"></div>
<div class="a" style="left:1589px;top:1395.5px;width:362px;height:1.5px;background:rgba(0,0,0,0.5);"></div>
<div class="a" style="left:1594px;top:28.5px;width:41px;height:3.2px;background:linear-gradient(90deg,#1a3dcc 0%,#2aa8f0 20%,#28c060 45%,#e8e040 65%,#f0a050 82%,#f07a6a 100%);border-radius:2px;filter:blur(0.4px);"></div>
<div class="a" style="left:1597px;top:33.3px;width:42px;height:3.2px;background:linear-gradient(90deg,#1a3dcc 0%,#2aa8f0 20%,#28c060 45%,#e8e040 65%,#f0a050 82%,#f07a6a 100%);border-radius:2px;filter:blur(0.4px);"></div>
<div class="a" style="left:1596px;top:38.1px;width:42px;height:3.2px;background:linear-gradient(90deg,#1a3dcc 0%,#2aa8f0 20%,#28c060 45%,#e8e040 65%,#f0a050 82%,#f07a6a 100%);border-radius:2px;filter:blur(0.4px);"></div>
<div class="a" style="left:1594px;top:42.699999999999996px;width:41px;height:3.2px;background:linear-gradient(90deg,#1a3dcc 0%,#2aa8f0 20%,#28c060 45%,#e8e040 65%,#f0a050 82%,#f07a6a 100%);border-radius:2px;filter:blur(0.4px);"></div>
<div class="a" style="left:1590px;top:47.199999999999996px;width:42px;height:3.2px;background:linear-gradient(90deg,#1a3dcc 0%,#2aa8f0 20%,#28c060 45%,#e8e040 65%,#f0a050 82%,#f07a6a 100%);border-radius:2px;filter:blur(0.4px);"></div>
<div class="t" style="left:1640.90px;top:24.26px;font-size:32.75px;line-height:32.75px;font-weight:normal;color:#f4f4f4;font-family:'Liberation Sans', sans-serif;transform:scaleX(0.78);transform-origin:left top;">CUE</div>
<div class="t" style="left:1694.50px;top:24.26px;font-size:32.75px;line-height:32.75px;font-weight:bold;color:#1a78c2;font-family:'Liberation Sans', sans-serif;transform:scaleX(0.82);transform-origin:left top;">2</div>
<div class="t" style="left:1710.00px;top:24.26px;font-size:32.75px;line-height:32.75px;font-weight:normal;color:#f4f4f4;font-family:'Liberation Sans', sans-serif;transform:scaleX(0.78);transform-origin:left top;">LIVE</div>
<div class="a" style="left:1949.7px;top:26.1px;width:16.6px;height:16.6px;background:#1ee81e;border-radius:50%;"></div>
<div class="t" style="left:1973.50px;top:23.78px;font-size:22.03px;line-height:22.03px;font-weight:normal;color:#f4f4f4;font-family:'Liberation Sans', sans-serif;transform:scaleX(0.925);transform-origin:left top;-webkit-text-stroke:0.6px #f4f4f4;">Connected to Live</div>
<div class="t" style="left:1588.30px;top:81.30px;font-size:33.77px;line-height:33.77px;font-weight:normal;color:#ececec;font-family:'Liberation Sans', sans-serif;transform:scaleX(0.873);transform-origin:left top;">BPM:</div>
<div class="t" style="left:1671.20px;top:80.19px;font-size:35.07px;line-height:35.07px;font-weight:normal;color:#a6c9f2;font-family:'Liberation Sans', sans-serif;transform:scaleX(0.88);transform-origin:left top;text-shadow:0 0 5px rgba(20,50,190,0.95),0 0 9px rgba(15,40,170,0.7);">120.0</div>
<div class="t" style="left:1767.00px;top:86.63px;font-size:26.09px;line-height:26.09px;font-weight:normal;color:#ececec;font-family:'Liberation Sans', sans-serif;transform:scaleX(0.809);transform-origin:left top;">Set Length:</div>
<div class="t" style="left:1885.00px;top:84.62px;font-size:29.86px;line-height:29.86px;font-weight:normal;color:#c4f0dc;font-family:'Liberation Sans', sans-serif;transform:scaleX(0.872);transform-origin:left top;-webkit-text-stroke:0.5px #c4f0dc;text-shadow:0 0 3px rgba(60,160,120,0.45);">00:11:41</div>
<div class="a" style="left:1589.5px;top:133.5px;width:362px;height:54px;background:#000;border:1.7px solid #a8a8a8;box-sizing:border-box;"></div>
<div class="t" style="left:1204.10px;width:1000px;text-align:center;top:142.31px;font-size:34.93px;line-height:34.93px;font-weight:normal;color:#e6e6e6;font-family:'Liberation Sans', sans-serif;transform:scaleX(0.82);transform-origin:center top;">S</div>
<div class="t" style="left:1228.30px;width:1000px;text-align:center;top:142.31px;font-size:34.93px;line-height:34.93px;font-weight:normal;color:#e6e6e6;font-family:'Liberation Sans', sans-serif;transform:scaleX(0.82);transform-origin:center top;">E</div>
<div class="t" style="left:1250.90px;width:1000px;text-align:center;top:142.31px;font-size:34.93px;line-height:34.93px;font-weight:normal;color:#e6e6e6;font-family:'Liberation Sans', sans-serif;transform:scaleX(0.82);transform-origin:center top;">T</div>
<div class="t" style="left:1275.40px;width:1000px;text-align:center;top:142.31px;font-size:34.93px;line-height:34.93px;font-weight:normal;color:#e6e6e6;font-family:'Liberation Sans', sans-serif;transform:scaleX(0.82);transform-origin:center top;">L</div>
<div class="t" style="left:1293.90px;width:1000px;text-align:center;top:142.31px;font-size:34.93px;line-height:34.93px;font-weight:normal;color:#e6e6e6;font-family:'Liberation Sans', sans-serif;transform:scaleX(0.82);transform-origin:center top;">I</div>
<div class="t" style="left:1312.60px;width:1000px;text-align:center;top:142.31px;font-size:34.93px;line-height:34.93px;font-weight:normal;color:#e6e6e6;font-family:'Liberation Sans', sans-serif;transform:scaleX(0.82);transform-origin:center top;">S</div>
<div class="t" style="left:1336.10px;width:1000px;text-align:center;top:142.31px;font-size:34.93px;line-height:34.93px;font-weight:normal;color:#e6e6e6;font-family:'Liberation Sans', sans-serif;transform:scaleX(0.82);transform-origin:center top;">T</div>
<div class="a" style="left:1589.5px;top:187.5px;width:362px;height:49.5px;background:#1466df;"></div>
<div class="a" style="left:1589.5px;top:236.5px;width:362px;height:5px;background:#000;"></div>
<div class="a" style="left:1589.5px;top:237.0px;width:362px;height:3.2px;background:#dedede;"></div>
<div class="a" style="left:1589.5px;top:288.3px;width:362px;height:5px;background:#000;"></div>
<div class="a" style="left:1589.5px;top:288.8px;width:362px;height:3.2px;background:#dedede;"></div>
<div class="a" style="left:1589.5px;top:340.1px;width:362px;height:5px;background:#000;"></div>
<div class="a" style="left:1589.5px;top:340.6px;width:362px;height:3.2px;background:#dedede;"></div>
<div class="a" style="left:1589.5px;top:391.9px;width:362px;height:5px;background:#000;"></div>
<div class="a" style="left:1589.5px;top:392.4px;width:362px;height:3.2px;background:#dedede;"></div>
<div class="a" style="left:1589.5px;top:443.7px;width:362px;height:5px;background:#000;"></div>
<div class="a" style="left:1589.5px;top:444.2px;width:362px;height:3.2px;background:#dedede;"></div>
<div class="a" style="left:1589.5px;top:495.5px;width:362px;height:5px;background:#000;"></div>
<div class="a" style="left:1589.5px;top:496.0px;width:362px;height:3.2px;background:#dedede;"></div>
<div class="a" style="left:1589.5px;top:547.3px;width:362px;height:5px;background:#000;"></div>
<div class="a" style="left:1589.5px;top:547.8px;width:362px;height:3.2px;background:#dedede;"></div>
<div class="a" style="left:1589.5px;top:599.0999999999999px;width:362px;height:5px;background:#000;"></div>
<div class="a" style="left:1589.5px;top:599.5999999999999px;width:362px;height:3.2px;background:#dedede;"></div>
<div class="a" style="left:1589.5px;top:650.9px;width:362px;height:5px;background:#000;"></div>
<div class="a" style="left:1589.5px;top:651.4px;width:362px;height:3.2px;background:#dedede;"></div>
<div class="a" style="left:1589.5px;top:702.7px;width:362px;height:5px;background:#000;"></div>
<div class="a" style="left:1589.5px;top:703.2px;width:362px;height:3.2px;background:#dedede;"></div>
<div class="a" style="left:1589.5px;top:754.5px;width:362px;height:5px;background:#000;"></div>
<div class="a" style="left:1589.5px;top:755.0px;width:362px;height:3.2px;background:#dedede;"></div>
<div class="a" style="left:1589.5px;top:806.3px;width:362px;height:5px;background:#000;"></div>
<div class="a" style="left:1589.5px;top:806.8px;width:362px;height:3.2px;background:#dedede;"></div>
<div class="a" style="left:1589.5px;top:858.0999999999999px;width:362px;height:5px;background:#000;"></div>
<div class="a" style="left:1589.5px;top:858.5999999999999px;width:362px;height:3.2px;background:#dedede;"></div>
<div class="a" style="left:1589.5px;top:909.9px;width:362px;height:5px;background:#000;"></div>
<div class="a" style="left:1589.5px;top:910.4px;width:362px;height:3.2px;background:#dedede;"></div>
<div class="a" style="left:1589.5px;top:961.6999999999999px;width:362px;height:5px;background:#000;"></div>
<div class="a" style="left:1589.5px;top:962.1999999999999px;width:362px;height:3.2px;background:#dedede;"></div>
<div class="a" style="left:1589.5px;top:1013.5px;width:362px;height:5px;background:#000;"></div>
<div class="a" style="left:1589.5px;top:1014.0px;width:362px;height:3.2px;background:#dedede;"></div>
<div class="a" style="left:1589.5px;top:1065.3px;width:362px;height:5px;background:#000;"></div>
<div class="a" style="left:1589.5px;top:1065.8px;width:362px;height:3.2px;background:#dedede;"></div>
<div class="a" style="left:1589.5px;top:1117.1px;width:362px;height:5px;background:#000;"></div>
<div class="a" style="left:1589.5px;top:1117.6px;width:362px;height:3.2px;background:#dedede;"></div>
<div class="a" style="left:1589.5px;top:1168.9px;width:362px;height:5px;background:#000;"></div>
<div class="a" style="left:1589.5px;top:1169.4px;width:362px;height:3.2px;background:#dedede;"></div>
<div class="a" style="left:1589.5px;top:1220.6999999999998px;width:362px;height:5px;background:#000;"></div>
<div class="a" style="left:1589.5px;top:1221.1999999999998px;width:362px;height:3.2px;background:#dedede;"></div>
<div class="a" style="left:1589.5px;top:1272.5px;width:362px;height:5px;background:#000;"></div>
<div class="a" style="left:1589.5px;top:1273.0px;width:362px;height:3.2px;background:#dedede;"></div>
<div class="a" style="left:1589.5px;top:1324.3px;width:362px;height:5px;background:#000;"></div>
<div class="a" style="left:1589.5px;top:1324.8px;width:362px;height:3.2px;background:#dedede;"></div>
<div class="a" style="left:1589.5px;top:1376.1px;width:362px;height:5px;background:#000;"></div>
<div class="a" style="left:1589.5px;top:1376.6px;width:362px;height:3.2px;background:#dedede;"></div>
<div class="t" style="left:1595.10px;top:187.80px;font-size:30.00px;line-height:30.00px;font-weight:normal;color:#ffffff;font-family:'Liberation Sans', sans-serif;transform:scaleX(0.93);transform-origin:left top;">TRACK 2</div>
<div class="t" style="left:1595.10px;top:239.60px;font-size:30.00px;line-height:30.00px;font-weight:normal;color:#ffffff;font-family:'Liberation Sans', sans-serif;transform:scaleX(0.93);transform-origin:left top;">TRACK 3</div>
<div class="t" style="left:1595.10px;top:291.40px;font-size:30.00px;line-height:30.00px;font-weight:normal;color:#ffffff;font-family:'Liberation Sans', sans-serif;transform:scaleX(0.93);transform-origin:left top;">TRACK 1</div>
<div class="a" style="left:1974.6px;top:273.2px;width:122px;height:58.8px;border-radius:5px;background:linear-gradient(70deg,#46467a 0%,#7c86bc 50%,#a8ccee 100%);box-shadow:inset 0 5px 2px -1px rgba(255,255,255,0.13), inset -5px 0 2px -1px rgba(255,255,255,0.10), inset 5px 0 3px -2px rgba(0,0,0,0.25), inset 0 -6px 4px -2px rgba(0,0,0,0.45), 0 1px 2px rgba(0,0,0,0.6);"></div>
<div class="t" style="left:1534.20px;width:1000px;text-align:center;top:291.35px;font-size:20.29px;line-height:20.29px;font-weight:normal;color:#ffffff;font-family:'Liberation Sans', sans-serif;transform:scaleX(0.852);transform-origin:center top;">MIDI MAP</div>
<div class="a" style="left:1973.7px;top:411.7px;width:67px;height:73.7px;border-radius:5px;background:linear-gradient(45deg,#12a048 0%,#50b850 50%,#d8e040 100%);box-shadow:inset 0 5px 2px -1px rgba(255,255,255,0.13), inset -5px 0 2px -1px rgba(255,255,255,0.10), inset 5px 0 3px -2px rgba(0,0,0,0.25), inset 0 -6px 4px -2px rgba(0,0,0,0.45), 0 1px 2px rgba(0,0,0,0.6);"></div>
<div class="t" style="left:1508.50px;width:1000px;text-align:center;top:437.41px;font-size:24.64px;line-height:24.64px;font-weight:normal;color:#ffffff;font-family:'Liberation Sans', sans-serif;transform:scaleX(0.83);transform-origin:center top;">PLAY</div>
<div class="a" style="left:1974px;top:558.4px;width:67px;height:72.3px;border-radius:5px;background:linear-gradient(45deg,#e02020 0%,#f05a2a 50%,#f4a050 100%);box-shadow:inset 0 5px 2px -1px rgba(255,255,255,0.13), inset -5px 0 2px -1px rgba(255,255,255,0.10), inset 5px 0 3px -2px rgba(0,0,0,0.25), inset 0 -6px 4px -2px rgba(0,0,0,0.45), 0 1px 2px rgba(0,0,0,0.6);"></div>
<div class="t" style="left:1508.80px;width:1000px;text-align:center;top:583.41px;font-size:24.64px;line-height:24.64px;font-weight:normal;color:#ffffff;font-family:'Liberation Sans', sans-serif;transform:scaleX(0.83);transform-origin:center top;">STOP</div>
<div class="a" style="left:1974px;top:705.2px;width:67px;height:72.2px;border-radius:5px;background:linear-gradient(45deg,#9a2098 0%,#d05aa0 50%,#f4a080 100%);box-shadow:inset 0 5px 2px -1px rgba(255,255,255,0.13), inset -5px 0 2px -1px rgba(255,255,255,0.10), inset 5px 0 3px -2px rgba(0,0,0,0.25), inset 0 -6px 4px -2px rgba(0,0,0,0.45), 0 1px 2px rgba(0,0,0,0.6);"></div>
<div class="t" style="left:1508.80px;width:1000px;text-align:center;top:730.16px;font-size:24.64px;line-height:24.64px;font-weight:normal;color:#ffffff;font-family:'Liberation Sans', sans-serif;transform:scaleX(0.83);transform-origin:center top;">PREV</div>
<div class="a" style="left:1974px;top:851.9px;width:67px;height:72.2px;border-radius:5px;background:linear-gradient(45deg,#1878e0 0%,#30b8e0 50%,#b8e080 100%);box-shadow:inset 0 5px 2px -1px rgba(255,255,255,0.13), inset -5px 0 2px -1px rgba(255,255,255,0.10), inset 5px 0 3px -2px rgba(0,0,0,0.25), inset 0 -6px 4px -2px rgba(0,0,0,0.45), 0 1px 2px rgba(0,0,0,0.6);"></div>
<div class="t" style="left:1508.80px;width:1000px;text-align:center;top:876.86px;font-size:24.64px;line-height:24.64px;font-weight:normal;color:#ffffff;font-family:'Liberation Sans', sans-serif;transform:scaleX(0.83);transform-origin:center top;">NEXT</div>
<div class="a" style="left:1973.9px;top:997.9px;width:66.8px;height:72.9px;border-radius:5px;background:linear-gradient(0deg,#34373c 0%,#50555c 50%,#6c737a 100%);box-shadow:inset 0 5px 2px -1px rgba(255,255,255,0.13), inset -5px 0 2px -1px rgba(255,255,255,0.10), inset 5px 0 3px -2px rgba(0,0,0,0.25), inset 0 -6px 4px -2px rgba(0,0,0,0.45), 0 1px 2px rgba(0,0,0,0.6);"></div>
<svg class="a" style="left:1993px;top:1016px;" width="28" height="40" viewBox="0 0 28 40"><rect x="3" y="4" width="22" height="3.2" rx="1" fill="#fff"/><rect x="10.5" y="1.5" width="7" height="3" rx="1" fill="#fff"/><path d="M4.5 9H23.5L22 35.5Q21.8 37 20.3 37H7.7Q6.2 37 6 35.5Z" fill="#fff"/><rect x="9.5" y="12.5" width="2.4" height="20" fill="#50555c"/><rect x="12.8" y="12.5" width="2.4" height="20" fill="#50555c" opacity="0"/><rect x="16.1" y="12.5" width="2.4" height="20" fill="#50555c"/></svg>
<svg class="a" style="left:2093px;top:1323px" width="70" height="76" viewBox="0 0 70 76">
<defs><linearGradient id="og" x1="0" y1="0" x2="1" y2="0">
<stop offset="0" stop-color="#1a3aa8"/><stop offset="0.22" stop-color="#2ab0e8"/><stop offset="0.45" stop-color="#38c070"/><stop offset="0.62" stop-color="#f0d040"/><stop offset="1" stop-color="#f07848"/></linearGradient></defs>
<path fill-rule="evenodd" fill="url(#og)" d="M34 1.5C52 1.5 67 18 67 38C67 58 52 74.5 34 74.5C16 74.5 1.5 58 1.5 38C1.5 18 16 1.5 34 1.5ZM33 8C26 8 20.5 21 20.5 38C20.5 55 26 68 33 68C40 68 45.5 55 45.5 38C45.5 21 40 8 33 8Z" style="filter:blur(0.9px)"/>
</svg>
<div class="a" style="left:1579px;top:1414px;width:587px;height:2px;background:#262626;"></div>
</body></html>
